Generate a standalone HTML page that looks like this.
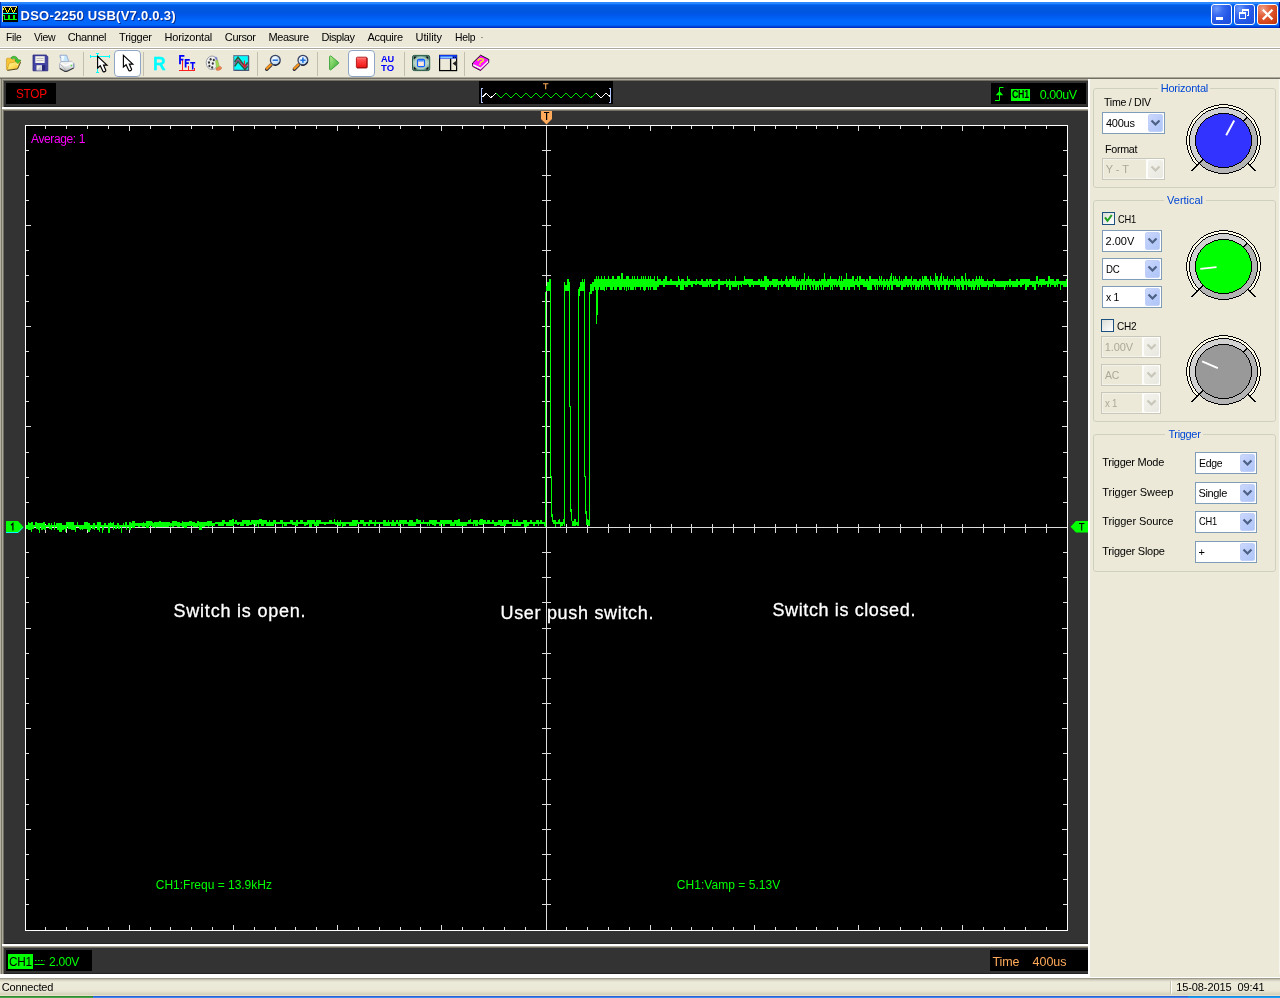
<!DOCTYPE html><html><head><meta charset="utf-8"><title>DSO-2250 USB</title><style>
html,body{margin:0;padding:0;}
body{width:1280px;height:998px;overflow:hidden;background:#ece9d8;position:relative;font-family:"Liberation Sans",sans-serif;}
.a{position:absolute;}
.t{position:absolute;white-space:pre;font-family:"Liberation Sans",sans-serif;}
#root{position:absolute;left:0;top:0;width:1280px;height:998px;overflow:hidden;will-change:transform;}
svg{position:absolute;overflow:visible;}
</style></head><body><div id="root">
<div class="a" style="left:0;top:0;width:1280px;height:2px;background:#fff"></div>
<div class="a" style="left:0;top:2px;width:1280px;height:26px;background:linear-gradient(to bottom,#2c88ff 0px,#2c88ff 1.5px,#0a6af8 2.5px,#005de9 3.5px,#0058e0 5px,#0056e0 11px,#0058ea 13px,#005ff4 16px,#0066fd 18px,#0067fd 22.5px,#005cf0 23.5px,#0046d8 24.5px,#002ec6 25.5px,#002ec6 26px)"></div>
<div class="a" style="left:0;top:28px;width:1280px;height:1px;background:#f8f1dc"></div>
<div class="a" style="left:0;top:2px;width:1px;height:26px;background:#0033b8"></div>
<div class="t" style="left:20.50px;top:7px;font-size:13px;line-height:17px;color:#fff;font-weight:700;letter-spacing:0.259px;text-shadow:1px 1px 0 #0a2a8a;">DSO-2250 USB(V7.0.0.3)</div>
<div class="t" style="left:5.50px;top:30px;font-size:11px;line-height:14px;color:#000;font-weight:400;letter-spacing:-0.300px;transform:scaleX(0.9272);transform-origin:0 0;">File</div>
<div class="t" style="left:33.60px;top:30px;font-size:11px;line-height:14px;color:#000;font-weight:400;letter-spacing:-0.300px;transform:scaleX(0.9541);transform-origin:0 0;">View</div>
<div class="t" style="left:67.80px;top:30px;font-size:11px;line-height:14px;color:#000;font-weight:400;letter-spacing:-0.396px;">Channel</div>
<div class="t" style="left:119.10px;top:30px;font-size:11px;line-height:14px;color:#000;font-weight:400;letter-spacing:-0.256px;">Trigger</div>
<div class="t" style="left:164.60px;top:30px;font-size:11px;line-height:14px;color:#000;font-weight:400;letter-spacing:-0.202px;">Horizontal</div>
<div class="t" style="left:224.80px;top:30px;font-size:11px;line-height:14px;color:#000;font-weight:400;letter-spacing:-0.361px;">Cursor</div>
<div class="t" style="left:268.50px;top:30px;font-size:11px;line-height:14px;color:#000;font-weight:400;letter-spacing:-0.383px;">Measure</div>
<div class="t" style="left:321.50px;top:30px;font-size:11px;line-height:14px;color:#000;font-weight:400;letter-spacing:-0.428px;">Display</div>
<div class="t" style="left:367.50px;top:30px;font-size:11px;line-height:14px;color:#000;font-weight:400;letter-spacing:-0.300px;">Acquire</div>
<div class="t" style="left:415.50px;top:30px;font-size:11px;line-height:14px;color:#000;font-weight:400;letter-spacing:-0.065px;">Utility</div>
<div class="t" style="left:454.50px;top:30px;font-size:11px;line-height:14px;color:#000;font-weight:400;letter-spacing:-0.300px;transform:scaleX(0.9437);transform-origin:0 0;">Help</div>
<div class="a" style="left:481px;top:37px;width:2px;height:1px;background:#9a9890"></div>
<div class="a" style="left:0;top:47px;width:1280px;height:1px;background:#fff"></div>
<div class="a" style="left:0;top:48px;width:1280px;height:1px;background:#aca899"></div>
<div class="a" style="left:0;top:49px;width:1280px;height:1px;background:#fff"></div>
<svg style="left:2px;top:6px" width="16" height="16" viewBox="0 0 16 16" shape-rendering="crispEdges"><rect width="16" height="16" fill="#000"/><path d="M0 15.5V.5H15" stroke="#d4d0c8" fill="none"/><rect x="1" y="2" width="1" height="2" fill="#ffff00"/><rect x="2" y="1" width="1" height="1" fill="#ffff00"/><rect x="3" y="2" width="1" height="2" fill="#ffff00"/><rect x="4" y="4" width="1" height="2" fill="#ffff00"/><rect x="5" y="6" width="1" height="1" fill="#ffff00"/><rect x="6" y="4" width="1" height="2" fill="#ffff00"/><rect x="7" y="2" width="1" height="2" fill="#ffff00"/><rect x="8" y="1" width="1" height="1" fill="#ffff00"/><rect x="9" y="2" width="1" height="2" fill="#ffff00"/><rect x="10" y="4" width="1" height="2" fill="#ffff00"/><rect x="11" y="6" width="1" height="1" fill="#ffff00"/><rect x="12" y="4" width="1" height="2" fill="#ffff00"/><rect x="13" y="2" width="1" height="2" fill="#ffff00"/><rect x="14" y="1" width="1" height="1" fill="#ffff00"/><rect x="1" y="7" width="14" height="1" fill="#00ffff"/><path d="M1 9.5H2.5V13.5H6.5V9.5H7.5V13.5H11.5V9.5H12.5V13.5H15" stroke="#00ff00" fill="none"/></svg>
<div class="a" style="left:1211px;top:4px;width:19px;height:19px;border:1px solid #fff;border-radius:3px;background:radial-gradient(circle at 25% 20%,#6f9bfa 0%,#3a6cf0 30%,#2457e6 60%,#1f4fd8 100%)"></div>
<div class="a" style="left:1234px;top:4px;width:19px;height:19px;border:1px solid #fff;border-radius:3px;background:radial-gradient(circle at 25% 20%,#6f9bfa 0%,#3a6cf0 30%,#2457e6 60%,#1f4fd8 100%)"></div>
<div class="a" style="left:1257px;top:4px;width:19px;height:19px;border:1px solid #fff;border-radius:3px;background:radial-gradient(circle at 25% 20%,#f0a088 0%,#e2603a 35%,#d4441a 70%,#b83208 100%)"></div>
<svg style="left:0;top:0" width="1280" height="32"><rect x="1216" y="17" width="7" height="3" fill="#fff"/><path d="M1239.5 13V18.5H1245.5V13M1239 13H1246M1242.5 11.5V10H1248.5V15.5H1246.5M1242 10H1249" stroke="#fff" stroke-width="1" fill="none" shape-rendering="crispEdges"/><rect x="1239" y="12" width="7" height="2" fill="#fff"/><rect x="1242" y="9" width="7" height="2" fill="#fff"/><path d="M1262.8 9.8L1272.4 19.4M1272.4 9.8L1262.8 19.4" stroke="#fff" stroke-width="2.2" fill="none"/></svg>
<div class="a" style="left:1279px;top:2px;width:1px;height:26px;background:#00138c;"></div>
<div class="a" style="left:83px;top:52px;width:1px;height:24px;background:#c2bfae;"></div>
<div class="a" style="left:143px;top:52px;width:1px;height:24px;background:#c2bfae;"></div>
<div class="a" style="left:257px;top:52px;width:1px;height:24px;background:#c2bfae;"></div>
<div class="a" style="left:317px;top:52px;width:1px;height:24px;background:#c2bfae;"></div>
<div class="a" style="left:404px;top:52px;width:1px;height:24px;background:#c2bfae;"></div>
<div class="a" style="left:464px;top:52px;width:1px;height:24px;background:#c2bfae;"></div>
<div class="a" style="left:114px;top:50px;width:25px;height:25px;border:1px solid #8fa6c6;border-radius:4px;background:#fff"></div>
<div class="a" style="left:348px;top:50px;width:25px;height:25px;border:1px solid #8fa6c6;border-radius:4px;background:#fff"></div>
<svg style="left:0;top:0" width="520" height="80" viewBox="0 0 520 80"><defs><linearGradient id="gfo" x1="0" y1="0" x2="1" y2="1"><stop offset="0" stop-color="#fff8b4"/><stop offset=".5" stop-color="#fde05c"/><stop offset="1" stop-color="#eeaa1c"/></linearGradient><linearGradient id="ggr" x1="0" y1="0" x2="1" y2="1"><stop offset="0" stop-color="#b8ee90"/><stop offset="1" stop-color="#2fa82c"/></linearGradient><linearGradient id="gpr" x1="0" y1="0" x2="0" y2="1"><stop offset="0" stop-color="#f4f4f4"/><stop offset=".5" stop-color="#e6e6e6"/><stop offset="1" stop-color="#b4b6ba"/></linearGradient><linearGradient id="grd" x1="0" y1="0" x2="0" y2="1"><stop offset="0" stop-color="#ff9a9a"/><stop offset=".25" stop-color="#ff4a4a"/><stop offset="1" stop-color="#f01010"/></linearGradient><radialGradient id="gln" cx=".4" cy=".35" r=".7"><stop offset="0" stop-color="#ffffff"/><stop offset="1" stop-color="#a8d0f0"/></radialGradient><linearGradient id="gfs" x1="0" y1="0" x2="0" y2="1"><stop offset="0" stop-color="#5c9484"/><stop offset=".5" stop-color="#b4d0c4"/><stop offset="1" stop-color="#5c9484"/></linearGradient></defs><path d="M6.4 58.9L7 58.2H11.4L12.6 59.4H17.2V62L9.4 63.4L7.2 70L6.4 69.4Z" fill="#f6c434" stroke="#c08c14" stroke-width=".5"/><path d="M7.2 70.1L9.3 63.2L20.7 60.9L17.6 68.6Z" fill="url(#gfo)" stroke="#c08c14" stroke-width=".4"/><path d="M7.4 70.4L17.6 68.9L20.6 62.2" fill="none" stroke="#4a3a10" stroke-width=".9"/><path d="M16.3 64.2L17.7 63.9L17.3 65.4Z" fill="#fff"/><path d="M10.9 58C12.2 55.6 16.8 55.4 18 59.7L20.8 60.3L17.9 63.5L15 60.6L16.2 60.1C15.4 58.2 13.4 58 12.6 58.8Z" fill="#48c838" stroke="#168a16" stroke-width=".6" stroke-linejoin="round"/><path d="M33 55H46.2L47.8 56.6V70.8H33Z" fill="#4444a4" stroke="#28287c" stroke-width=".8"/><rect x="35.3" y="56.2" width="9.4" height="6.8" fill="#f4f2e8"/><path d="M36.5 58.5H43.5M36.5 60.5H43.5" stroke="#b8b8c0" stroke-width=".9"/><rect x="36" y="65" width="9.2" height="5.6" fill="#26267a"/><rect x="36.4" y="65.2" width="5.6" height="5.2" fill="#f0eee6"/><path d="M36.6 70.2L41.6 65.4V70.2Z" fill="#c8c8d4"/><path d="M60 55.2H66.6L68.8 61.6H61V57.6H60Z" fill="#c4e6fc" stroke="#8494c8" stroke-width=".7" stroke-linejoin="round"/><path d="M61.2 56H64.4L63.2 61H61.6Z" fill="#f4fbff"/><path d="M59.5 63.6L61.6 61.6L71.4 61.3L73.7 63.2V67.8L66.6 71.2H64.6L59.5 68.2Z" fill="url(#gpr)" stroke="#8c98b4" stroke-width=".6" stroke-linejoin="round"/><path d="M60.4 64.4C63 66.6 64.6 67.8 65.6 70.6" stroke="#b4b4b8" stroke-width="1" fill="none"/><path d="M61 63.2L65.4 65.6L72.6 62.6" stroke="#fff" stroke-width="1.3" fill="none"/><path d="M59.8 68.5L64.7 71.4H66.7L73.7 68" stroke="#383838" stroke-width="1.1" fill="none" stroke-linejoin="round"/><path d="M73.9 63.6V67.8" stroke="#6c8cc4" stroke-width=".9"/><rect x="70.7" y="64.8" width="1.5" height="1.5" fill="#58d848"/><path d="M90 56.5H110M97.5 53.5V73M90.5 55V58M109.5 55V58M96 53.5H99M96 72.5H99" stroke="#00ffff" stroke-width="1.3" fill="none" shape-rendering="crispEdges"/><path d="M97.6 56.4V68.0L100.3 65.7L102.89999999999999 71.3C103.39999999999999 72.4 106.19999999999999 71.4 105.8 70.2L103.5 65.1H107.0Z" fill="#fff" stroke="#000" stroke-width="1.15" stroke-linejoin="miter"/><path d="M123.4 55.4V67.0L126.10000000000001 64.7L128.70000000000002 70.3C129.20000000000002 71.4 132.0 70.4 131.6 69.2L129.3 64.1H132.8Z" fill="#fff" stroke="#000" stroke-width="1.15" stroke-linejoin="miter"/><text x="152.9" y="69.5" font-family="Liberation Sans" font-weight="700" font-size="17.6" fill="#00ffff" stroke="#00ffff" stroke-width=".3">R</text><path d="M179 70.3H195.4M182.4 59V70M188.4 66V70M194.4 68V70" stroke="#ff2020" stroke-width="1" fill="none" shape-rendering="crispEdges"/><path d="M180 64.2V55.8H184.4M180 59.6H183.4" stroke="#0000ff" stroke-width="1.8" fill="none"/><path d="M185.6 67.6V59.8H189.8M185.6 63.2H188.8" stroke="#0000ff" stroke-width="1.7" fill="none"/><path d="M190.2 62.8H195.2M192.7 62.8V69.4" stroke="#0000ff" stroke-width="1.6" fill="none"/><ellipse cx="212" cy="62.8" rx="5.8" ry="6.8" fill="#f0f0f0" stroke="#9498a0" stroke-width=".9"/><ellipse cx="210.6" cy="59.2" rx="1.05" ry="1.25" fill="#383838"/><ellipse cx="213.8" cy="60" rx="1.05" ry="1.25" fill="#383838"/><ellipse cx="209" cy="62.6" rx="1.05" ry="1.25" fill="#383838"/><ellipse cx="212.8" cy="63.6" rx="1.05" ry="1.25" fill="#383838"/><ellipse cx="209.4" cy="66" rx="1.05" ry="1.25" fill="#383838"/><ellipse cx="212.2" cy="67.4" rx="1.05" ry="1.25" fill="#383838"/><path d="M214.4 57C216.4 56.2 217.8 57.6 217.4 59.6L216.2 60.4Z" fill="#8088d0"/><path d="M215.6 60.4L217.6 60L219.4 66.6L216.4 68.8Z" fill="#a8d858" stroke="#78a838" stroke-width=".4"/><path d="M216.2 68.6L219.4 66.4C221.4 66.6 222.2 67.8 221.4 68.8C219.8 70.6 217 70.8 216 69.8Z" fill="#f0804c" stroke="#b85830" stroke-width=".4"/><rect x="233.8" y="55.6" width="14.6" height="14.8" fill="#00ffff" stroke="#6c7c98" stroke-width="1.2"/><path d="M234.4 70.4H248.6V56" stroke="#485878" stroke-width="1.2" fill="none"/><path d="M234.6 62L238 57.2L245 66.4L247.6 62.4M234.6 66.4L238 61.6L245 69.6L247.6 66.2" stroke="#285838" stroke-width="1.5" fill="none"/><path d="M234.6 64.2L238 59.6L245 67.8L247.8 64.2" stroke="#e01060" stroke-width="1" fill="none"/><path d="M244.4 60.6V66.6M243 64.6L244.4 66.8L245.9 64.6" stroke="#ff1020" stroke-width="1" fill="none"/><path d="M270.90000000000003 65L266.7 69.2" stroke="#303038" stroke-width="3.4" stroke-linecap="round"/><path d="M271.1 64.4L266.7 68.6" stroke="#f4941c" stroke-width="2.2" stroke-linecap="round"/><circle cx="275.3" cy="60.2" r="4.9" fill="url(#gln)" stroke="#3c4464" stroke-width="1.3"/><path d="M273.5 64.9A5 5 0 0 0 279.90000000000003 62" stroke="#20243c" stroke-width="1.3" fill="none"/><path d="M272.7 60.2H277.90000000000003" stroke="#1c6cdc" stroke-width="1.5"/><path d="M298.5 65L294.29999999999995 69.2" stroke="#303038" stroke-width="3.4" stroke-linecap="round"/><path d="M298.7 64.4L294.29999999999995 68.6" stroke="#f4941c" stroke-width="2.2" stroke-linecap="round"/><circle cx="302.9" cy="60.2" r="4.9" fill="url(#gln)" stroke="#3c4464" stroke-width="1.3"/><path d="M301.09999999999997 64.9A5 5 0 0 0 307.5 62" stroke="#20243c" stroke-width="1.3" fill="none"/><path d="M300.29999999999995 60.2H305.5M302.9 57.6V62.8" stroke="#1c6cdc" stroke-width="1.6"/><path d="M329.6 56.6C329.6 55.9 330.5 55.7 331.1 56.2L338.3 62.2C338.8 62.6 338.8 63.2 338.3 63.6L331.1 69.6C330.5 70.1 329.6 69.9 329.6 69.2Z" fill="url(#ggr)" stroke="#2c9c2c" stroke-width=".9"/><rect x="356.4" y="57.2" width="10.6" height="10.6" rx="1" fill="url(#grd)" stroke="#b01010" stroke-width=".9"/><path d="M367 58V67.8H357" stroke="#900808" stroke-width=".9" fill="none"/><text x="380.9" y="61.9" font-family="Liberation Sans" font-weight="700" font-size="9.8" fill="#0000ff" textLength="13.3" lengthAdjust="spacingAndGlyphs">AU</text><text x="381.1" y="70.9" font-family="Liberation Sans" font-weight="700" font-size="9.8" fill="#0000ff" textLength="13.1" lengthAdjust="spacingAndGlyphs">TO</text><rect x="412.5" y="55.4" width="17.2" height="15.2" rx="1.8" fill="url(#gfs)" stroke="#2c5c4c" stroke-width="1"/><ellipse cx="421" cy="63" rx="6.6" ry="6.6" fill="#c0d8cc" opacity=".75"/><path d="M413.8 56.6H416.8L413.8 59.6ZM428.4 56.6H425.4L428.4 59.6ZM413.8 69.4H416.8L413.8 66.4ZM428.4 69.4H425.4L428.4 66.4Z" fill="#101010"/><rect x="417.5" y="59.4" width="7" height="7.2" rx="1.2" fill="#fbe8dc" stroke="#1060ff" stroke-width="1.2"/><rect x="418.2" y="60" width="5.6" height="1.6" fill="#5090ff"/><rect x="439.6" y="55.4" width="17" height="15.2" fill="#ece9d8" stroke="#000" stroke-width="1.2"/><rect x="439.4" y="55" width="17.4" height="3.6" fill="#1038f0"/><rect x="440.4" y="56.6" width="12" height="1.2" fill="#a0f0ff"/><path d="M453 57.4H456" stroke="#000" stroke-width="1" stroke-dasharray="1 .8"/><path d="M450.6 58.6V70.4" stroke="#000" stroke-width="1.3"/><path d="M457 60.2V66.8L452.6 63.5Z" fill="#202020"/><path d="M472.6 63L480.6 55.2L488.8 59.4L488.6 62.6L480.6 70.6L472.8 66.4Z" fill="#ff10ff" stroke="#000" stroke-width=".9" stroke-linejoin="round"/><path d="M473.2 64L480.6 67.6L488.2 60.2L488.2 62.4L480.6 69.8L473.2 66.2Z" fill="#f4f4f0"/><path d="M473.2 66.4L480.6 70L488.4 62.6" stroke="#a000a0" stroke-width="1" fill="none"/><path d="M478 60.4C479 58.2 483 58.4 483.6 59.8C484 61.4 481 61.4 480.4 62.8M479.8 64.2L480 64.4" stroke="#e8f020" stroke-width="1.5" fill="none" stroke-linecap="round"/></svg>
<div class="a" style="left:0;top:77px;width:1280px;height:1px;background:#aca899"></div>
<div class="a" style="left:0;top:78px;width:1280px;height:1px;background:#716f64"></div>
<div class="a" id="scope" style="left:0;top:79px;width:1088px;height:895px;background:#333"></div>
<div class="a" style="left:0px;top:79px;width:1px;height:895px;background:#b5b2a3"></div>
<div class="a" style="left:1px;top:79px;width:1px;height:895px;background:#7c7a6b"></div>
<div class="a" style="left:2px;top:79px;width:1086px;height:1px;background:#aca899"></div>
<div class="a" style="left:2px;top:80px;width:1086px;height:1px;background:#716f64"></div>
<div class="a" style="left:2px;top:79px;width:1px;height:28px;background:#aca899"></div>
<div class="a" style="left:3px;top:80px;width:1px;height:27px;background:#716f64"></div>
<div class="a" style="left:4px;top:106px;width:1084px;height:1px;background:#232323"></div>
<div class="a" style="left:2px;top:109px;width:1086px;height:1px;background:#aca899"></div>
<div class="a" style="left:2px;top:110px;width:1086px;height:1px;background:#716f64"></div>
<div class="a" style="left:2px;top:109px;width:1px;height:835px;background:#aca899"></div>
<div class="a" style="left:3px;top:110px;width:1px;height:834px;background:#716f64"></div>
<div class="a" style="left:4px;top:943px;width:1084px;height:1px;background:#232323"></div>
<div class="a" style="left:2px;top:946px;width:1086px;height:1px;background:#aca899"></div>
<div class="a" style="left:2px;top:947px;width:1086px;height:1px;background:#716f64"></div>
<div class="a" style="left:2px;top:946px;width:1px;height:28px;background:#aca899"></div>
<div class="a" style="left:3px;top:947px;width:1px;height:27px;background:#716f64"></div>
<div class="a" style="left:4px;top:973px;width:1084px;height:1px;background:#232323"></div>
<div class="a" style="left:2px;top:107px;width:1086px;height:2px;background:#fff"></div>
<div class="a" style="left:2px;top:944px;width:1086px;height:2px;background:#fff"></div>
<div class="a" style="left:6px;top:83px;width:50px;height:21px;background:#000"></div>
<div class="a" style="left:991px;top:83px;width:95px;height:21px;background:#000"></div>
<div class="a" style="left:479px;top:81px;width:134px;height:23px;background:#000"></div>
<div class="a" style="left:6px;top:950px;width:86px;height:21px;background:#000"></div>
<div class="a" style="left:990px;top:950px;width:98px;height:21px;background:#000"></div>
<div class="t" style="left:16.00px;top:86px;font-size:12px;line-height:16px;color:#ff0000;font-weight:400;letter-spacing:-0.300px;transform:scaleX(0.9824);transform-origin:0 0;">STOP</div>
<div class="a" style="left:25px;top:125px;width:1043px;height:806px;background:#000"></div>
<svg style="left:0;top:0" width="1280" height="998" viewBox="0 0 1280 998" shape-rendering="crispEdges"><path d="M45.5 126v3M45.5 930v-3M45.5 524v9M66.5 126v3M66.5 930v-3M66.5 524v9M87.5 126v3M87.5 930v-3M87.5 524v9M108.5 126v3M108.5 930v-3M108.5 524v9M129.5 126v5M129.5 930v-5M129.5 524v9M150.5 126v3M150.5 930v-3M150.5 524v9M170.5 126v3M170.5 930v-3M170.5 524v9M191.5 126v3M191.5 930v-3M191.5 524v9M212.5 126v3M212.5 930v-3M212.5 524v9M233.5 126v5M233.5 930v-5M233.5 524v9M254.5 126v3M254.5 930v-3M254.5 524v9M275.5 126v3M275.5 930v-3M275.5 524v9M295.5 126v3M295.5 930v-3M295.5 524v9M316.5 126v3M316.5 930v-3M316.5 524v9M337.5 126v5M337.5 930v-5M337.5 524v9M358.5 126v3M358.5 930v-3M358.5 524v9M379.5 126v3M379.5 930v-3M379.5 524v9M400.5 126v3M400.5 930v-3M400.5 524v9M420.5 126v3M420.5 930v-3M420.5 524v9M441.5 126v5M441.5 930v-5M441.5 524v9M462.5 126v3M462.5 930v-3M462.5 524v9M483.5 126v3M483.5 930v-3M483.5 524v9M504.5 126v3M504.5 930v-3M504.5 524v9M525.5 126v3M525.5 930v-3M525.5 524v9M546.5 126v5M546.5 930v-5M566.5 126v3M566.5 930v-3M566.5 524v9M587.5 126v3M587.5 930v-3M587.5 524v9M608.5 126v3M608.5 930v-3M608.5 524v9M629.5 126v3M629.5 930v-3M629.5 524v9M650.5 126v5M650.5 930v-5M650.5 524v9M671.5 126v3M671.5 930v-3M671.5 524v9M691.5 126v3M691.5 930v-3M691.5 524v9M712.5 126v3M712.5 930v-3M712.5 524v9M733.5 126v3M733.5 930v-3M733.5 524v9M754.5 126v5M754.5 930v-5M754.5 524v9M775.5 126v3M775.5 930v-3M775.5 524v9M796.5 126v3M796.5 930v-3M796.5 524v9M816.5 126v3M816.5 930v-3M816.5 524v9M837.5 126v3M837.5 930v-3M837.5 524v9M858.5 126v5M858.5 930v-5M858.5 524v9M879.5 126v3M879.5 930v-3M879.5 524v9M900.5 126v3M900.5 930v-3M900.5 524v9M921.5 126v3M921.5 930v-3M921.5 524v9M941.5 126v3M941.5 930v-3M941.5 524v9M962.5 126v5M962.5 930v-5M962.5 524v9M983.5 126v3M983.5 930v-3M983.5 524v9M1004.5 126v3M1004.5 930v-3M1004.5 524v9M1025.5 126v3M1025.5 930v-3M1025.5 524v9M1046.5 126v3M1046.5 930v-3M1046.5 524v9M26 150.5h3M1067 150.5h-4M542 150.5h9M26 175.5h3M1067 175.5h-4M542 175.5h9M26 200.5h3M1067 200.5h-4M542 200.5h9M26 225.5h5M1067 225.5h-5M542 225.5h9M26 250.5h3M1067 250.5h-4M542 250.5h9M26 275.5h3M1067 275.5h-4M542 275.5h9M26 301.5h3M1067 301.5h-4M542 301.5h9M26 326.5h5M1067 326.5h-5M542 326.5h9M26 351.5h3M1067 351.5h-4M542 351.5h9M26 376.5h3M1067 376.5h-4M542 376.5h9M26 401.5h3M1067 401.5h-4M542 401.5h9M26 426.5h5M1067 426.5h-5M542 426.5h9M26 452.5h3M1067 452.5h-4M542 452.5h9M26 477.5h3M1067 477.5h-4M542 477.5h9M26 502.5h3M1067 502.5h-4M542 502.5h9M26 527.5h5M1067 527.5h-5M26 552.5h3M1067 552.5h-4M542 552.5h9M26 577.5h3M1067 577.5h-4M542 577.5h9M26 602.5h3M1067 602.5h-4M542 602.5h9M26 628.5h5M1067 628.5h-5M542 628.5h9M26 653.5h3M1067 653.5h-4M542 653.5h9M26 678.5h3M1067 678.5h-4M542 678.5h9M26 703.5h3M1067 703.5h-4M542 703.5h9M26 728.5h5M1067 728.5h-5M542 728.5h9M26 753.5h3M1067 753.5h-4M542 753.5h9M26 779.5h3M1067 779.5h-4M542 779.5h9M26 804.5h3M1067 804.5h-4M542 804.5h9M26 829.5h5M1067 829.5h-5M542 829.5h9M26 854.5h3M1067 854.5h-4M542 854.5h9M26 879.5h3M1067 879.5h-4M542 879.5h9M26 904.5h3M1067 904.5h-4M542 904.5h9M546.5 125V930M25 527.5H1067" fill="none" stroke="#dcdcdc" stroke-width="1"/><path d="M25.5 125.5H1067.5V930.5H25.5Z" fill="none" stroke="#fff" stroke-width="1"/></svg>
<svg style="left:0;top:0" width="1280" height="998" viewBox="0 0 1280 998" shape-rendering="crispEdges"><path d="M26.5 525V529M27.5 525V529M28.5 522V530M29.5 523V530M30.5 523V530M31.5 522V532M32.5 522V529M33.5 525V529M34.5 525V527M35.5 522V527M36.5 522V529M37.5 523V529M38.5 523V530M39.5 523V533M40.5 523V527M41.5 523V530M42.5 523V530M43.5 522V529M44.5 522V530M45.5 525V530M46.5 525V527M47.5 525V527M48.5 523V527M49.5 523V529M50.5 525V529M51.5 523V530M52.5 525V527M53.5 525V527M54.5 522V530M55.5 525V527M56.5 523V527M57.5 523V530M58.5 523V530M59.5 523V532M60.5 523V532M61.5 523V532M62.5 525V530M63.5 525V530M64.5 525V529M65.5 525V532M66.5 522V529M67.5 522V527M68.5 522V529M69.5 522V529M70.5 522V529M71.5 522V530M72.5 522V530M73.5 522V530M74.5 525V530M75.5 525V532M76.5 525V527M77.5 522V527M78.5 525V527M79.5 525V529M80.5 525V530M81.5 525V529M82.5 525V530M83.5 525V529M84.5 522V529M85.5 522V529M86.5 522V529M87.5 522V530M88.5 523V532M89.5 523V532M90.5 525V530M91.5 525V527M92.5 525V529M93.5 523V529M94.5 523V530M95.5 525V527M96.5 525V527M97.5 522V530M98.5 522V530M99.5 522V532M100.5 522V527M101.5 525V527M102.5 525V533M103.5 525V530M104.5 523V527M105.5 523V527M106.5 525V527M107.5 525V527M108.5 523V533M109.5 523V533M110.5 522V527M111.5 523V527M112.5 523V527M113.5 522V530M114.5 525V527M115.5 525V529M116.5 525V529M117.5 523V527M118.5 523V529M119.5 525V529M120.5 525V527M121.5 525V533M122.5 525V527M123.5 523V527M124.5 525V527M125.5 522V527M126.5 522V530M127.5 525V527M128.5 525V527M129.5 522V530M130.5 522V530M131.5 523V527M132.5 521V528M133.5 521V528M134.5 521V528M135.5 523V526M136.5 523V526M137.5 523V526M138.5 523V527M139.5 523V527M140.5 523V526M141.5 523V526M142.5 523V527M143.5 522V527M144.5 523V527M145.5 523V526M146.5 521V528M147.5 521V528M148.5 521V528M149.5 521V526M150.5 521V526M151.5 521V526M152.5 522V527M153.5 523V527M154.5 522V527M155.5 522V528M156.5 522V527M157.5 522V527M158.5 522V527M159.5 521V527M160.5 521V527M161.5 522V527M162.5 522V527M163.5 522V527M164.5 522V527M165.5 522V527M166.5 522V527M167.5 522V527M168.5 522V527M169.5 522V526M170.5 523V527M171.5 523V526M172.5 521V527M173.5 521V527M174.5 521V526M175.5 521V526M176.5 521V526M177.5 522V527M178.5 522V527M179.5 522V527M180.5 523V526M181.5 523V526M182.5 521V527M183.5 522V527M184.5 522V528M185.5 522V528M186.5 522V528M187.5 522V526M188.5 522V526M189.5 521V526M190.5 521V526M191.5 521V526M192.5 522V526M193.5 522V527M194.5 522V527M195.5 523V527M196.5 523V527M197.5 521V527M198.5 521V526M199.5 522V530M200.5 522V530M201.5 522V530M202.5 522V527M203.5 522V527M204.5 522V527M205.5 522V526M206.5 522V526M207.5 521V526M208.5 521V527M209.5 521V526M210.5 521V526M211.5 521V526M212.5 523V526M213.5 523V526M214.5 523V526M215.5 522V524M216.5 522V524M217.5 522V524M218.5 522V526M219.5 522V526M220.5 522V526M221.5 522V526M222.5 520V526M223.5 520V526M224.5 520V524M225.5 522V524M226.5 522V526M227.5 522V526M228.5 522V526M229.5 520V526M230.5 520V526M231.5 520V526M232.5 519V526M233.5 519V526M234.5 522V524M235.5 520V524M236.5 520V524M237.5 522V525M238.5 522V525M239.5 522V524M240.5 522V526M241.5 522V526M242.5 520V526M243.5 520V526M244.5 520V524M245.5 520V524M246.5 520V526M247.5 520V526M248.5 520V526M249.5 520V525M250.5 522V525M251.5 520V525M252.5 520V524M253.5 520V525M254.5 520V524M255.5 520V526M256.5 520V526M257.5 520V524M258.5 520V527M259.5 519V524M260.5 519V524M261.5 519V526M262.5 520V526M263.5 520V526M264.5 520V524M265.5 520V524M266.5 520V526M267.5 522V526M268.5 522V526M269.5 520V526M270.5 522V526M271.5 522V526M272.5 522V526M273.5 520V526M274.5 520V524M275.5 520V524M276.5 522V524M277.5 522V524M278.5 522V524M279.5 522V524M280.5 520V524M281.5 520V524M282.5 520V527M283.5 522V524M284.5 522V526M285.5 522V526M286.5 522V526M287.5 522V524M288.5 522V524M289.5 522V524M290.5 520V524M291.5 520V524M292.5 520V525M293.5 522V525M294.5 522V525M295.5 522V526M296.5 520V526M297.5 520V526M298.5 522V524M299.5 522V524M300.5 520V524M301.5 520V524M302.5 520V524M303.5 522V524M304.5 522V526M305.5 522V526M306.5 522V525M307.5 520V525M308.5 520V524M309.5 520V527M310.5 520V527M311.5 520V527M312.5 520V524M313.5 520V524M314.5 520V526M315.5 522V526M316.5 520V526M317.5 520V526M318.5 520V526M319.5 520V524M320.5 520V524M321.5 522V524M322.5 522V524M323.5 522V524M324.5 522V525M325.5 522V525M326.5 522V524M327.5 522V524M328.5 522V524M329.5 520V524M330.5 520V524M331.5 520V524M332.5 522V524M333.5 522V524M334.5 519V524M335.5 522V525M336.5 522V525M337.5 520V525M338.5 522V526M339.5 522V526M340.5 520V526M341.5 522V524M342.5 522V527M343.5 522V526M344.5 522V526M345.5 522V526M346.5 522V524M347.5 522V524M348.5 522V524M349.5 522V526M350.5 522V526M351.5 522V526M352.5 520V526M353.5 520V526M354.5 520V526M355.5 520V526M356.5 520V526M357.5 520V524M358.5 522V524M359.5 522V524M360.5 520V524M361.5 520V524M362.5 520V524M363.5 520V526M364.5 522V526M365.5 522V526M366.5 522V524M367.5 522V524M368.5 522V526M369.5 520V526M370.5 520V524M371.5 520V524M372.5 522V524M373.5 522V524M374.5 522V526M375.5 520V526M376.5 522V524M377.5 522V524M378.5 522V524M379.5 522V524M380.5 522V524M381.5 522V524M382.5 522V524M383.5 520V526M384.5 520V526M385.5 520V526M386.5 522V526M387.5 522V526M388.5 520V526M389.5 522V526M390.5 522V524M391.5 522V526M392.5 520V526M393.5 520V526M394.5 522V526M395.5 522V526M396.5 520V524M397.5 520V524M398.5 522V526M399.5 520V526M400.5 520V524M401.5 520V524M402.5 520V524M403.5 520V526M404.5 520V524M405.5 520V524M406.5 520V524M407.5 522V524M408.5 522V526M409.5 520V526M410.5 520V526M411.5 520V526M412.5 520V526M413.5 522V526M414.5 522V526M415.5 522V526M416.5 519V524M417.5 519V524M418.5 520V524M419.5 520V524M420.5 520V524M421.5 522V524M422.5 522V524M423.5 520V524M424.5 522V524M425.5 522V524M426.5 522V524M427.5 522V526M428.5 522V524M429.5 520V526M430.5 520V524M431.5 520V524M432.5 520V525M433.5 520V525M434.5 520V526M435.5 520V526M436.5 520V524M437.5 522V524M438.5 522V524M439.5 522V526M440.5 520V526M441.5 520V524M442.5 520V524M443.5 520V526M444.5 520V526M445.5 520V524M446.5 520V524M447.5 520V524M448.5 520V524M449.5 520V524M450.5 520V526M451.5 520V526M452.5 522V526M453.5 522V526M454.5 520V526M455.5 520V524M456.5 520V526M457.5 520V526M458.5 519V526M459.5 519V526M460.5 522V526M461.5 522V526M462.5 522V526M463.5 522V526M464.5 522V526M465.5 522V526M466.5 522V526M467.5 522V524M468.5 520V524M469.5 520V524M470.5 519V524M471.5 522V524M472.5 522V524M473.5 520V526M474.5 520V524M475.5 520V526M476.5 520V526M477.5 520V526M478.5 522V524M479.5 520V525M480.5 519V525M481.5 519V525M482.5 519V525M483.5 520V524M484.5 520V524M485.5 520V524M486.5 522V524M487.5 520V524M488.5 520V524M489.5 520V524M490.5 522V524M491.5 522V524M492.5 520V524M493.5 520V524M494.5 522V526M495.5 522V526M496.5 522V526M497.5 522V525M498.5 520V525M499.5 520V525M500.5 520V526M501.5 520V526M502.5 522V526M503.5 520V526M504.5 520V526M505.5 520V526M506.5 520V524M507.5 520V524M508.5 520V524M509.5 522V524M510.5 522V524M511.5 522V524M512.5 522V526M513.5 519V526M514.5 522V526M515.5 522V526M516.5 520V526M517.5 520V526M518.5 522V526M519.5 522V526M520.5 522V526M521.5 522V524M522.5 522V524M523.5 520V524M524.5 520V527M525.5 520V527M526.5 520V527M527.5 522V526M528.5 522V526M529.5 522V524M530.5 520V524M531.5 520V524M532.5 522V524M533.5 522V526M534.5 522V526M535.5 522V524M536.5 520V524M537.5 520V524M538.5 520V526M539.5 522V524M540.5 520V524M541.5 520V524M542.5 522V524M543.5 522V524M544.5 522V526M545.5 292V527M546.5 286V291M547.5 282V291M548.5 282V291M549.5 279V291M550.5 279V291M553.5 520V524M554.5 520V524M555.5 520V527M556.5 522V524M557.5 522V524M558.5 520V524M559.5 519V524M560.5 522V527M561.5 522V526M562.5 522V526M563.5 519V524M564.5 522V524M565.5 285V291M566.5 285V291M567.5 279V291M568.5 279V291M572.5 521V526M573.5 521V526M574.5 519V526M575.5 519V526M576.5 522V525M577.5 522V526M578.5 522V526M579.5 287V296M580.5 282V291M581.5 282V291M582.5 279V291M583.5 282V291M586.5 520V525M587.5 519V525M588.5 520V526M589.5 520V526M590.5 284V294M591.5 284V294M592.5 282V291M593.5 282V291M594.5 279V287M595.5 279V290M596.5 276V290M597.5 279V287M598.5 276V290M599.5 279V287M600.5 279V290M601.5 276V290M602.5 279V290M603.5 279V290M604.5 276V291M605.5 279V287M606.5 279V290M607.5 279V287M608.5 276V287M609.5 279V287M610.5 279V290M611.5 279V290M612.5 276V290M613.5 276V287M614.5 279V290M615.5 279V290M616.5 279V290M617.5 276V287M618.5 276V287M619.5 276V290M620.5 279V290M621.5 273V290M622.5 273V287M623.5 279V287M624.5 279V290M625.5 279V287M626.5 276V291M627.5 276V287M628.5 276V290M629.5 279V287M630.5 279V290M631.5 279V290M632.5 276V290M633.5 279V290M634.5 276V287M635.5 279V290M636.5 279V287M637.5 276V287M638.5 279V287M639.5 279V287M640.5 279V290M641.5 276V287M642.5 279V287M643.5 276V290M644.5 279V291M645.5 276V290M646.5 279V287M647.5 279V287M648.5 276V290M649.5 279V287M650.5 276V290M651.5 279V287M652.5 279V287M653.5 279V290M654.5 276V290M655.5 281V290M656.5 281V290M657.5 276V287M658.5 279V287M659.5 279V285M660.5 279V285M661.5 281V285M662.5 281V285M663.5 279V287M664.5 279V287M665.5 276V285M666.5 276V285M667.5 281V285M668.5 281V285M669.5 281V285M670.5 279V285M671.5 279V285M672.5 281V285M673.5 281V285M674.5 281V285M675.5 281V285M676.5 281V287M677.5 281V287M678.5 276V285M679.5 279V285M680.5 281V290M681.5 279V290M682.5 279V290M683.5 279V290M684.5 281V285M685.5 281V287M686.5 281V287M687.5 276V287M688.5 279V285M689.5 279V285M690.5 281V285M691.5 281V287M692.5 281V287M693.5 281V284M694.5 281V284M695.5 281V285M696.5 279V285M697.5 281V284M698.5 281V284M699.5 281V285M700.5 281V285M701.5 279V285M702.5 279V287M703.5 281V287M704.5 281V287M705.5 281V287M706.5 279V287M707.5 279V287M708.5 281V285M709.5 279V287M710.5 279V284M711.5 279V287M712.5 281V287M713.5 281V287M714.5 281V285M715.5 281V285M716.5 281V284M717.5 281V284M718.5 279V290M719.5 279V290M720.5 281V285M721.5 281V285M722.5 281V285M723.5 281V285M724.5 281V284M725.5 281V284M726.5 279V287M727.5 281V287M728.5 281V285M729.5 279V290M730.5 281V290M731.5 281V285M732.5 281V287M733.5 281V287M734.5 281V287M735.5 276V287M736.5 281V287M737.5 281V285M738.5 281V290M739.5 281V285M740.5 281V285M741.5 281V287M742.5 281V284M743.5 281V285M744.5 276V285M745.5 279V285M746.5 279V285M747.5 279V284M748.5 279V285M749.5 279V287M750.5 279V287M751.5 279V285M752.5 279V285M753.5 281V287M754.5 281V285M755.5 281V285M756.5 281V285M757.5 281V285M758.5 279V285M759.5 279V285M760.5 281V287M761.5 279V287M762.5 281V287M763.5 281V287M764.5 276V287M765.5 276V290M766.5 276V290M767.5 279V287M768.5 279V287M769.5 281V285M770.5 281V287M771.5 281V285M772.5 279V285M773.5 279V287M774.5 279V287M775.5 279V287M776.5 279V287M777.5 279V285M778.5 281V290M779.5 281V285M780.5 281V285M781.5 279V287M782.5 281V287M783.5 281V285M784.5 281V284M785.5 279V285M786.5 276V287M787.5 279V287M788.5 281V287M789.5 279V287M790.5 279V285M791.5 279V287M792.5 276V287M793.5 276V287M794.5 279V287M795.5 276V287M796.5 281V290M797.5 279V287M798.5 281V287M799.5 279V285M800.5 281V290M801.5 279V290M802.5 279V285M803.5 279V290M804.5 273V290M805.5 281V285M806.5 279V290M807.5 279V285M808.5 276V285M809.5 279V287M810.5 279V290M811.5 279V285M812.5 281V287M813.5 279V290M814.5 279V285M815.5 281V290M816.5 281V290M817.5 281V287M818.5 281V290M819.5 279V285M820.5 281V287M821.5 279V290M822.5 279V285M823.5 279V290M824.5 273V287M825.5 279V287M826.5 281V287M827.5 279V287M828.5 279V287M829.5 279V285M830.5 276V290M831.5 279V287M832.5 279V290M833.5 279V285M834.5 279V287M835.5 279V285M836.5 279V287M837.5 281V287M838.5 279V285M839.5 276V287M840.5 281V290M841.5 276V290M842.5 281V290M843.5 279V287M844.5 279V287M845.5 279V290M846.5 273V290M847.5 279V287M848.5 279V290M849.5 279V290M850.5 279V287M851.5 279V287M852.5 276V287M853.5 276V287M854.5 281V290M855.5 279V285M856.5 279V285M857.5 276V287M858.5 281V287M859.5 276V290M860.5 276V285M861.5 279V285M862.5 279V285M863.5 279V287M864.5 279V287M865.5 281V287M866.5 279V287M867.5 279V290M868.5 281V290M869.5 276V290M870.5 276V290M871.5 279V290M872.5 279V285M873.5 279V285M874.5 279V287M875.5 279V290M876.5 279V285M877.5 279V290M878.5 281V285M879.5 276V287M880.5 279V285M881.5 276V287M882.5 281V285M883.5 279V290M884.5 279V287M885.5 281V287M886.5 279V285M887.5 279V290M888.5 281V287M889.5 279V290M890.5 276V285M891.5 273V290M892.5 281V290M893.5 276V285M894.5 279V285M895.5 276V285M896.5 279V287M897.5 279V287M898.5 281V287M899.5 276V287M900.5 281V285M901.5 279V290M902.5 281V290M903.5 279V287M904.5 279V287M905.5 276V287M906.5 276V285M907.5 279V287M908.5 279V287M909.5 279V285M910.5 279V287M911.5 276V290M912.5 281V285M913.5 279V287M914.5 279V285M915.5 279V290M916.5 279V290M917.5 281V287M918.5 281V290M919.5 279V287M920.5 279V285M921.5 281V290M922.5 276V287M923.5 279V290M924.5 276V285M925.5 276V285M926.5 276V287M927.5 279V285M928.5 279V287M929.5 281V290M930.5 276V285M931.5 279V285M932.5 281V285M933.5 279V285M934.5 281V287M935.5 273V290M936.5 276V285M937.5 276V287M938.5 281V290M939.5 279V290M940.5 276V285M941.5 273V287M942.5 281V285M943.5 276V285M944.5 279V290M945.5 279V290M946.5 279V285M947.5 276V285M948.5 281V290M949.5 279V287M950.5 281V285M951.5 279V285M952.5 279V285M953.5 281V285M954.5 276V287M955.5 281V285M956.5 279V287M957.5 279V290M958.5 279V287M959.5 279V290M960.5 281V285M961.5 276V287M962.5 276V290M963.5 279V290M964.5 281V285M965.5 273V285M966.5 279V290M967.5 281V285M968.5 279V287M969.5 279V287M970.5 281V287M971.5 281V290M972.5 279V287M973.5 279V290M974.5 281V290M975.5 279V287M976.5 276V285M977.5 279V290M978.5 279V287M979.5 276V290M980.5 279V285M981.5 276V287M982.5 279V287M983.5 279V287M984.5 281V287M985.5 281V287M986.5 281V287M987.5 279V285M988.5 281V290M989.5 281V287M990.5 281V287M991.5 281V287M992.5 281V287M993.5 279V284M994.5 279V287M995.5 281V285M996.5 281V287M997.5 281V287M998.5 281V287M999.5 281V287M1000.5 281V287M1001.5 281V287M1002.5 281V287M1003.5 281V287M1004.5 281V290M1005.5 281V287M1006.5 281V285M1007.5 281V287M1008.5 281V285M1009.5 279V287M1010.5 279V287M1011.5 281V285M1012.5 281V287M1013.5 281V287M1014.5 281V287M1015.5 281V287M1016.5 279V287M1017.5 279V287M1018.5 281V285M1019.5 281V285M1020.5 279V287M1021.5 279V287M1022.5 279V285M1023.5 279V285M1024.5 279V284M1025.5 279V290M1026.5 279V290M1027.5 279V287M1028.5 279V287M1029.5 279V285M1030.5 281V285M1031.5 281V285M1032.5 281V287M1033.5 281V287M1034.5 281V290M1035.5 281V290M1036.5 276V284M1037.5 276V284M1038.5 281V287M1039.5 279V285M1040.5 279V285M1041.5 279V287M1042.5 279V285M1043.5 279V285M1044.5 279V285M1045.5 281V285M1046.5 281V284M1047.5 281V287M1048.5 276V287M1049.5 276V284M1050.5 279V287M1051.5 279V285M1052.5 279V285M1053.5 279V285M1054.5 281V287M1055.5 281V287M1056.5 279V285M1057.5 279V287M1058.5 279V284M1059.5 281V284M1060.5 281V290M1061.5 281V285M1062.5 281V285M1063.5 281V287M1064.5 281V287M1065.5 281V287M1066.5 279V287M550.5 280V477M551.5 476V517M552.5 514V522M564.5 282V526M569.5 282V407M570.5 406V512M571.5 509V521M578.5 289V526M584.5 279V477M585.5 476V514M586.5 511V521M589.5 292V526M596.5 280V324M597.5 280V315" fill="none" stroke="#00ff00" stroke-width="1"/></svg>
<svg style="left:0;top:0" width="1280" height="998" viewBox="0 0 1280 998"><path d="M541 111H552V119L546.5 124.5L541 119Z" fill="#ffaa5a"/><path d="M544 112.5H549.2M546.6 112.5V120" stroke="#000" stroke-width="1.2" fill="none"/><path d="M6 521H18L23.5 527L18 533H6Z" fill="#00ff00"/><path d="M6 532.5H18L23 527.3" stroke="#00ffff" stroke-width="1" fill="none"/><path d="M1088 521H1076L1070.5 526.7L1076 532.5H1088Z" fill="#00ff00"/><path d="M1079 523.5H1084.4M1081.7 523.5V530.5" stroke="#000" stroke-width="1.1" fill="none"/><polyline points="482.5,97 486,93.3 491,97.6 496,93.3" fill="none" stroke="#fff" stroke-width="1" shape-rendering="crispEdges"/><polyline points="496,93.3 501,97.6 506,93.3 511,97.6 516,93.3 521,97.6 526,93.3 531,97.6 536,93.3 541,97.6 546,93.3 551,97.6 556,93.3 561,97.6 566,93.3 571,97.6 576,93.3 581,97.6 586,93.3 591,97.6 596,93.3" fill="none" stroke="#00e000" stroke-width="1" shape-rendering="crispEdges"/><polyline points="596,93.3 601,97.6 606,93.3 610,96.5" fill="none" stroke="#fff" stroke-width="1" shape-rendering="crispEdges"/><path d="M483 88.5H481.5V102.5H483M609 88.5H610.5V102.5H609" stroke="#b0c4ff" stroke-width="1" fill="none" shape-rendering="crispEdges"/><path d="M543 83.8H548.4M545.7 83.8V89.2" stroke="#ffaa5a" stroke-width="1.1" fill="none"/><path d="M995 100.5H999.5V87.5H1003.5" stroke="#00ff00" stroke-width="1" fill="none"/><path d="M995.8 95.2L999.5 91L1003.2 95.2Z" fill="#00ff00"/><path d="M34.5 964.5H44.5" stroke="#00ff00" stroke-width="1" fill="none"/><path d="M35 960.5H44.5" stroke="#00ff00" stroke-width="1" stroke-dasharray="1.5 1.5" fill="none"/></svg>
<svg style="left:0;top:0" width="40" height="998"><path d="M11 525.2L12.9 523.4V530.6" stroke="#000" stroke-width="1.2" fill="none"/></svg>
<div class="t" style="left:31.00px;top:131px;font-size:12px;line-height:16px;color:#ff00ff;font-weight:400;letter-spacing:-0.391px;">Average: 1</div>
<div class="t" style="left:155.80px;top:877px;font-size:12px;line-height:16px;color:#00ff00;font-weight:400;letter-spacing:-0.016px;">CH1:Frequ = 13.9kHz</div>
<div class="t" style="left:676.80px;top:877px;font-size:12px;line-height:16px;color:#00ff00;font-weight:400;letter-spacing:0.038px;">CH1:Vamp = 5.13V</div>
<div class="t" style="left:173.50px;top:600px;font-size:18px;line-height:22px;color:#fff;font-weight:400;letter-spacing:0.789px;-webkit-text-stroke:0.3px #fff;">Switch is open.</div>
<div class="t" style="left:500.50px;top:602px;font-size:18px;line-height:22px;color:#fff;font-weight:400;letter-spacing:0.684px;-webkit-text-stroke:0.3px #fff;">User push switch.</div>
<div class="t" style="left:772.40px;top:599px;font-size:18px;line-height:22px;color:#fff;font-weight:400;letter-spacing:0.622px;-webkit-text-stroke:0.3px #fff;">Switch is closed.</div>
<div class="a" style="left:1011px;top:89px;width:19px;height:12px;background:#00ff00"></div>
<div class="t" style="left:1012.00px;top:88px;font-size:10px;line-height:13px;color:#000;font-weight:700;letter-spacing:-0.300px;transform:scaleX(0.8761);transform-origin:0 0;">CH1</div>
<div class="t" style="left:1039.70px;top:87px;font-size:12.5px;line-height:16px;color:#00ff00;font-weight:400;letter-spacing:-0.444px;">0.00uV</div>
<div class="a" style="left:8px;top:954px;width:25px;height:15px;background:#00ff00"></div>
<div class="t" style="left:9.00px;top:954px;font-size:12px;line-height:16px;color:#000;font-weight:400;letter-spacing:-0.300px;transform:scaleX(0.9827);transform-origin:0 0;">CH1</div>
<div class="t" style="left:48.90px;top:954px;font-size:12.5px;line-height:16px;color:#00ff00;font-weight:400;letter-spacing:-0.300px;transform:scaleX(0.9661);transform-origin:0 0;">2.00V</div>
<div class="t" style="left:992.50px;top:954px;font-size:12.5px;line-height:16px;color:#ffaa5a;font-weight:400;letter-spacing:-0.104px;">Time</div>
<div class="t" style="left:1032.50px;top:954px;font-size:12.5px;line-height:16px;color:#ffaa5a;font-weight:400;letter-spacing:-0.014px;">400us</div>
<div class="a" style="left:1088px;top:79px;width:2px;height:897px;background:#fff"></div>
<div class="a" style="left:1093px;top:88px;width:181px;height:98px;border:1px solid #d0d0bf;border-radius:3px"></div>
<div class="a" style="left:1158px;top:88px;width:52px;height:1px;background:#ece9d8;"></div>
<div class="t" style="left:1160.75px;top:81px;font-size:11px;line-height:14px;color:#0046d5;font-weight:400;letter-spacing:-0.225px;">Horizontal</div>
<div class="t" style="left:1104.10px;top:95px;font-size:11px;line-height:14px;color:#000;font-weight:400;letter-spacing:-0.300px;transform:scaleX(0.9664);transform-origin:0 0;">Time / DIV</div>
<div class="a" style="left:1102px;top:112px;width:61px;height:20px;border:1px solid #7f9db9;background:#fff"></div>
<div class="a" style="left:1148px;top:114px;width:13px;height:16px;border:1px solid #c0d0f8;border-radius:2px;background:linear-gradient(135deg,#cbd8fc 0%,#bccdfa 45%,#afc6f8 100%)"></div>
<svg style="left:0;top:0" width="1280" height="998"><path d="M1151.5 120.5L1155.5 124.5L1159.5 120.5" fill="none" stroke="#4d6185" stroke-width="2.2"/></svg>
<div class="t" style="left:1105.90px;top:116px;font-size:11px;line-height:14px;color:#000;font-weight:400;letter-spacing:-0.218px;">400us</div>
<div class="t" style="left:1104.75px;top:142px;font-size:11px;line-height:14px;color:#000;font-weight:400;letter-spacing:-0.300px;transform:scaleX(0.9749);transform-origin:0 0;">Format</div>
<div class="a" style="left:1102px;top:158px;width:61px;height:20px;border:1px solid #c9c7ba;background:#ece9d8;box-shadow:inset 0 0 0 1px #f3f2ea"></div>
<div class="a" style="left:1146px;top:159px;width:18px;height:20px;background:#fdfdfb"></div>
<div class="a" style="left:1148px;top:160px;width:15px;height:18px;border-radius:2px;background:linear-gradient(135deg,#f3f2ec,#e9e8e0)"></div>
<svg style="left:0;top:0" width="1280" height="998"><path d="M1151.5 166.5L1155.5 170.5L1159.5 166.5" fill="none" stroke="#c9c7ba" stroke-width="2.2"/></svg>
<div class="t" style="left:1105.70px;top:162px;font-size:11px;line-height:14px;color:#aca899;font-weight:400;letter-spacing:-0.009px;">Y - T</div>
<div class="a" style="left:1093px;top:200px;width:181px;height:220px;border:1px solid #d0d0bf;border-radius:3px"></div>
<div class="a" style="left:1164px;top:200px;width:42px;height:1px;background:#ece9d8;"></div>
<div class="t" style="left:1167.10px;top:193px;font-size:11px;line-height:14px;color:#0046d5;font-weight:400;letter-spacing:-0.025px;">Vertical</div>
<div class="a" style="left:1102px;top:212px;width:11px;height:11px;border:1px solid #1c5180;background:linear-gradient(135deg,#dcdcd7,#fff)"></div>
<svg style="left:0;top:0" width="1280" height="998"><path d="M1105 217.4L1107.5 220.9L1111.8 215" fill="none" stroke="#21a121" stroke-width="2"/></svg>
<div class="t" style="left:1117.70px;top:212px;font-size:11px;line-height:14px;color:#000;font-weight:400;letter-spacing:-0.300px;transform:scaleX(0.8456);transform-origin:0 0;">CH1</div>
<div class="a" style="left:1102px;top:230px;width:58px;height:20px;border:1px solid #7f9db9;background:#fff"></div>
<div class="a" style="left:1145px;top:232px;width:13px;height:16px;border:1px solid #c0d0f8;border-radius:2px;background:linear-gradient(135deg,#cbd8fc 0%,#bccdfa 45%,#afc6f8 100%)"></div>
<svg style="left:0;top:0" width="1280" height="998"><path d="M1148.5 238.5L1152.5 242.5L1156.5 238.5" fill="none" stroke="#4d6185" stroke-width="2.2"/></svg>
<div class="t" style="left:1105.60px;top:234px;font-size:11px;line-height:14px;color:#000;font-weight:400;letter-spacing:-0.012px;">2.00V</div>
<div class="a" style="left:1102px;top:258px;width:58px;height:20px;border:1px solid #7f9db9;background:#fff"></div>
<div class="a" style="left:1145px;top:260px;width:13px;height:16px;border:1px solid #c0d0f8;border-radius:2px;background:linear-gradient(135deg,#cbd8fc 0%,#bccdfa 45%,#afc6f8 100%)"></div>
<svg style="left:0;top:0" width="1280" height="998"><path d="M1148.5 266.5L1152.5 270.5L1156.5 266.5" fill="none" stroke="#4d6185" stroke-width="2.2"/></svg>
<div class="t" style="left:1105.60px;top:262px;font-size:11px;line-height:14px;color:#000;font-weight:400;letter-spacing:-0.300px;transform:scaleX(0.8789);transform-origin:0 0;">DC</div>
<div class="a" style="left:1102px;top:286px;width:58px;height:20px;border:1px solid #7f9db9;background:#fff"></div>
<div class="a" style="left:1145px;top:288px;width:13px;height:16px;border:1px solid #c0d0f8;border-radius:2px;background:linear-gradient(135deg,#cbd8fc 0%,#bccdfa 45%,#afc6f8 100%)"></div>
<svg style="left:0;top:0" width="1280" height="998"><path d="M1148.5 294.5L1152.5 298.5L1156.5 294.5" fill="none" stroke="#4d6185" stroke-width="2.2"/></svg>
<div class="t" style="left:1105.60px;top:290px;font-size:11px;line-height:14px;color:#000;font-weight:400;letter-spacing:-0.300px;transform:scaleX(0.9450);transform-origin:0 0;">x 1</div>
<div class="a" style="left:1101px;top:319px;width:11px;height:11px;border:1px solid #1c5180;background:linear-gradient(135deg,#dcdcd7,#fff)"></div>
<div class="t" style="left:1116.80px;top:319px;font-size:11px;line-height:14px;color:#000;font-weight:400;letter-spacing:-0.300px;transform:scaleX(0.9110);transform-origin:0 0;">CH2</div>
<div class="a" style="left:1101px;top:336px;width:58px;height:20px;border:1px solid #c9c7ba;background:#ece9d8;box-shadow:inset 0 0 0 1px #f3f2ea"></div>
<div class="a" style="left:1142px;top:337px;width:18px;height:20px;background:#fdfdfb"></div>
<div class="a" style="left:1144px;top:338px;width:15px;height:18px;border-radius:2px;background:linear-gradient(135deg,#f3f2ec,#e9e8e0)"></div>
<svg style="left:0;top:0" width="1280" height="998"><path d="M1147.5 344.5L1151.5 348.5L1155.5 344.5" fill="none" stroke="#c9c7ba" stroke-width="2.2"/></svg>
<div class="t" style="left:1104.75px;top:340px;font-size:11px;line-height:14px;color:#aca899;font-weight:400;letter-spacing:-0.074px;">1.00V</div>
<div class="a" style="left:1101px;top:364px;width:58px;height:20px;border:1px solid #c9c7ba;background:#ece9d8;box-shadow:inset 0 0 0 1px #f3f2ea"></div>
<div class="a" style="left:1142px;top:365px;width:18px;height:20px;background:#fdfdfb"></div>
<div class="a" style="left:1144px;top:366px;width:15px;height:18px;border-radius:2px;background:linear-gradient(135deg,#f3f2ec,#e9e8e0)"></div>
<svg style="left:0;top:0" width="1280" height="998"><path d="M1147.5 372.5L1151.5 376.5L1155.5 372.5" fill="none" stroke="#c9c7ba" stroke-width="2.2"/></svg>
<div class="t" style="left:1104.90px;top:368px;font-size:11px;line-height:14px;color:#aca899;font-weight:400;letter-spacing:-0.300px;transform:scaleX(0.9512);transform-origin:0 0;">AC</div>
<div class="a" style="left:1101px;top:392px;width:58px;height:20px;border:1px solid #c9c7ba;background:#ece9d8;box-shadow:inset 0 0 0 1px #f3f2ea"></div>
<div class="a" style="left:1142px;top:393px;width:18px;height:20px;background:#fdfdfb"></div>
<div class="a" style="left:1144px;top:394px;width:15px;height:18px;border-radius:2px;background:linear-gradient(135deg,#f3f2ec,#e9e8e0)"></div>
<svg style="left:0;top:0" width="1280" height="998"><path d="M1147.5 400.5L1151.5 404.5L1155.5 400.5" fill="none" stroke="#c9c7ba" stroke-width="2.2"/></svg>
<div class="t" style="left:1104.90px;top:396px;font-size:11px;line-height:14px;color:#aca899;font-weight:400;letter-spacing:-0.300px;transform:scaleX(0.8811);transform-origin:0 0;">x 1</div>
<div class="a" style="left:1093px;top:434px;width:181px;height:136px;border:1px solid #d0d0bf;border-radius:3px"></div>
<div class="a" style="left:1165px;top:434px;width:38px;height:1px;background:#ece9d8;"></div>
<div class="t" style="left:1168.40px;top:427px;font-size:11px;line-height:14px;color:#0046d5;font-weight:400;letter-spacing:-0.339px;">Trigger</div>
<div class="t" style="left:1102.20px;top:455px;font-size:11px;line-height:14px;color:#000;font-weight:400;letter-spacing:-0.264px;">Trigger Mode</div>
<div class="a" style="left:1195px;top:452px;width:60px;height:20px;border:1px solid #7f9db9;background:#fff"></div>
<div class="a" style="left:1240px;top:454px;width:13px;height:16px;border:1px solid #c0d0f8;border-radius:2px;background:linear-gradient(135deg,#cbd8fc 0%,#bccdfa 45%,#afc6f8 100%)"></div>
<svg style="left:0;top:0" width="1280" height="998"><path d="M1243.5 460.5L1247.5 464.5L1251.5 460.5" fill="none" stroke="#4d6185" stroke-width="2.2"/></svg>
<div class="t" style="left:1198.60px;top:456px;font-size:11px;line-height:14px;color:#000;font-weight:400;letter-spacing:-0.300px;transform:scaleX(0.9520);transform-origin:0 0;">Edge</div>
<div class="t" style="left:1102.20px;top:485px;font-size:11px;line-height:14px;color:#000;font-weight:400;letter-spacing:-0.002px;">Trigger Sweep</div>
<div class="a" style="left:1195px;top:482px;width:60px;height:20px;border:1px solid #7f9db9;background:#fff"></div>
<div class="a" style="left:1240px;top:484px;width:13px;height:16px;border:1px solid #c0d0f8;border-radius:2px;background:linear-gradient(135deg,#cbd8fc 0%,#bccdfa 45%,#afc6f8 100%)"></div>
<svg style="left:0;top:0" width="1280" height="998"><path d="M1243.5 490.5L1247.5 494.5L1251.5 490.5" fill="none" stroke="#4d6185" stroke-width="2.2"/></svg>
<div class="t" style="left:1198.60px;top:486px;font-size:11px;line-height:14px;color:#000;font-weight:400;letter-spacing:-0.376px;">Single</div>
<div class="t" style="left:1102.20px;top:514px;font-size:11px;line-height:14px;color:#000;font-weight:400;letter-spacing:-0.096px;">Trigger Source</div>
<div class="a" style="left:1195px;top:511px;width:60px;height:20px;border:1px solid #7f9db9;background:#fff"></div>
<div class="a" style="left:1240px;top:513px;width:13px;height:16px;border:1px solid #c0d0f8;border-radius:2px;background:linear-gradient(135deg,#cbd8fc 0%,#bccdfa 45%,#afc6f8 100%)"></div>
<svg style="left:0;top:0" width="1280" height="998"><path d="M1243.5 519.5L1247.5 523.5L1251.5 519.5" fill="none" stroke="#4d6185" stroke-width="2.2"/></svg>
<div class="t" style="left:1198.60px;top:514px;font-size:11px;line-height:14px;color:#000;font-weight:400;letter-spacing:-0.300px;transform:scaleX(0.8456);transform-origin:0 0;">CH1</div>
<div class="t" style="left:1102.20px;top:544px;font-size:11px;line-height:14px;color:#000;font-weight:400;letter-spacing:-0.235px;">Trigger Slope</div>
<div class="a" style="left:1195px;top:541px;width:60px;height:20px;border:1px solid #7f9db9;background:#fff"></div>
<div class="a" style="left:1240px;top:543px;width:13px;height:16px;border:1px solid #c0d0f8;border-radius:2px;background:linear-gradient(135deg,#cbd8fc 0%,#bccdfa 45%,#afc6f8 100%)"></div>
<svg style="left:0;top:0" width="1280" height="998"><path d="M1243.5 549.5L1247.5 553.5L1251.5 549.5" fill="none" stroke="#4d6185" stroke-width="2.2"/></svg>
<div class="t" style="left:1198.60px;top:545px;font-size:11px;line-height:14px;color:#000;font-weight:400;letter-spacing:0.000px;">+</div>
<svg style="left:0;top:0" width="1280" height="998" shape-rendering="crispEdges"><ellipse cx="1223.5" cy="140.5" rx="28" ry="27" fill="#3333ff"/><path d="M1219 104.5h9M1214 105.5h5M1228 105.5h5M1211 106.5h3M1233 106.5h3M1208 107.5h3M1218 107.5h11M1236 107.5h3M1206 108.5h2M1214 108.5h4M1229 108.5h4M1239 108.5h2M1204 109.5h2M1211 109.5h3M1233 109.5h3M1241 109.5h2M1203 110.5h1M1208 110.5h3M1236 110.5h3M1243 110.5h1M1201 111.5h2M1206 111.5h2M1239 111.5h2M1244 111.5h2M1200 112.5h1M1205 112.5h1M1241 112.5h1M1246 112.5h1M1199 113.5h1M1203 113.5h2M1218 113.5h11M1242 113.5h2M1247 113.5h1M1198 114.5h1M1202 114.5h1M1214 114.5h4M1229 114.5h4M1244 114.5h1M1248 114.5h1M1197 115.5h1M1201 115.5h1M1212 115.5h2M1233 115.5h2M1245 115.5h1M1249 115.5h1M1196 116.5h1M1200 116.5h1M1210 116.5h2M1235 116.5h2M1246 116.5h1M1250 116.5h1M1195 117.5h1M1199 117.5h1M1208 117.5h2M1237 117.5h2M1246 117.5h2M1251 117.5h1M1194 118.5h1M1198 118.5h1M1206 118.5h2M1239 118.5h2M1245 118.5h2M1248 118.5h1M1252 118.5h1M1193 119.5h1M1197 119.5h1M1205 119.5h1M1241 119.5h1M1244 119.5h2M1249 119.5h1M1253 119.5h1M1192 120.5h1M1196 120.5h1M1204 120.5h1M1242 120.5h3M1250 120.5h1M1254 120.5h1M1192 121.5h1M1195 121.5h1M1203 121.5h1M1243 121.5h1M1251 121.5h1M1254 121.5h1M1191 122.5h1M1195 122.5h1M1202 122.5h1M1244 122.5h1M1251 122.5h1M1255 122.5h1M1191 123.5h1M1194 123.5h1M1201 123.5h1M1245 123.5h1M1252 123.5h1M1255 123.5h1M1190 124.5h1M1193 124.5h1M1200 124.5h1M1246 124.5h1M1253 124.5h1M1256 124.5h1M1190 125.5h1M1193 125.5h1M1200 125.5h1M1246 125.5h1M1253 125.5h1M1256 125.5h1M1189 126.5h1M1192 126.5h1M1199 126.5h1M1247 126.5h1M1254 126.5h1M1257 126.5h1M1189 127.5h1M1192 127.5h1M1198 127.5h1M1248 127.5h1M1254 127.5h1M1257 127.5h1M1188 128.5h1M1191 128.5h1M1198 128.5h1M1248 128.5h1M1255 128.5h1M1258 128.5h1M1188 129.5h1M1191 129.5h1M1197 129.5h1M1249 129.5h1M1255 129.5h1M1258 129.5h1M1188 130.5h1M1191 130.5h1M1197 130.5h1M1249 130.5h1M1255 130.5h1M1258 130.5h1M1187 131.5h1M1190 131.5h1M1197 131.5h1M1249 131.5h1M1256 131.5h1M1259 131.5h1M1187 132.5h1M1190 132.5h1M1196 132.5h1M1250 132.5h1M1256 132.5h1M1259 132.5h1M1187 133.5h1M1190 133.5h1M1196 133.5h1M1250 133.5h1M1256 133.5h1M1259 133.5h1M1187 134.5h1M1190 134.5h1M1196 134.5h1M1250 134.5h1M1256 134.5h1M1259 134.5h1M1187 135.5h1M1189 135.5h1M1195 135.5h1M1251 135.5h1M1257 135.5h1M1259 135.5h1M1186 136.5h1M1189 136.5h1M1195 136.5h1M1251 136.5h1M1257 136.5h1M1260 136.5h1M1186 137.5h1M1189 137.5h1M1195 137.5h1M1251 137.5h1M1257 137.5h1M1260 137.5h1M1186 138.5h1M1189 138.5h1M1195 138.5h1M1251 138.5h1M1257 138.5h1M1260 138.5h1M1186 139.5h1M1189 139.5h1M1195 139.5h1M1251 139.5h1M1257 139.5h1M1260 139.5h1M1186 140.5h1M1189 140.5h1M1195 140.5h1M1251 140.5h1M1257 140.5h1M1260 140.5h1M1186 141.5h1M1189 141.5h1M1195 141.5h1M1251 141.5h1M1257 141.5h1M1260 141.5h1M1186 142.5h1M1189 142.5h1M1195 142.5h1M1251 142.5h1M1257 142.5h1M1260 142.5h1M1186 143.5h1M1189 143.5h1M1195 143.5h1M1251 143.5h1M1257 143.5h1M1260 143.5h1M1186 144.5h1M1189 144.5h1M1195 144.5h1M1251 144.5h1M1257 144.5h1M1260 144.5h1M1187 145.5h1M1189 145.5h1M1195 145.5h1M1251 145.5h1M1257 145.5h1M1259 145.5h1M1187 146.5h1M1190 146.5h1M1196 146.5h1M1250 146.5h1M1256 146.5h1M1259 146.5h1M1187 147.5h1M1190 147.5h1M1196 147.5h1M1250 147.5h1M1256 147.5h1M1259 147.5h1M1187 148.5h1M1190 148.5h1M1196 148.5h1M1250 148.5h1M1256 148.5h1M1259 148.5h1M1187 149.5h1M1190 149.5h1M1197 149.5h1M1249 149.5h1M1256 149.5h1M1259 149.5h1M1188 150.5h1M1191 150.5h1M1197 150.5h1M1249 150.5h1M1255 150.5h1M1258 150.5h1M1188 151.5h1M1191 151.5h1M1197 151.5h1M1249 151.5h1M1255 151.5h1M1258 151.5h1M1188 152.5h1M1191 152.5h1M1198 152.5h1M1248 152.5h1M1255 152.5h1M1258 152.5h1M1189 153.5h1M1192 153.5h1M1198 153.5h1M1248 153.5h1M1254 153.5h1M1257 153.5h1M1189 154.5h1M1192 154.5h1M1199 154.5h1M1247 154.5h1M1254 154.5h1M1257 154.5h1M1190 155.5h1M1193 155.5h1M1200 155.5h1M1246 155.5h1M1253 155.5h1M1256 155.5h1M1190 156.5h1M1193 156.5h1M1200 156.5h1M1246 156.5h1M1253 156.5h1M1256 156.5h1M1191 157.5h1M1194 157.5h1M1201 157.5h1M1245 157.5h1M1252 157.5h1M1255 157.5h1M1191 158.5h1M1195 158.5h1M1202 158.5h1M1244 158.5h1M1251 158.5h1M1255 158.5h1M1192 159.5h1M1195 159.5h1M1202 159.5h2M1243 159.5h1M1251 159.5h1M1254 159.5h1M1192 160.5h1M1196 160.5h1M1201 160.5h2M1204 160.5h1M1242 160.5h1M1250 160.5h1M1254 160.5h1M1193 161.5h1M1197 161.5h1M1200 161.5h2M1205 161.5h1M1241 161.5h1M1249 161.5h1M1253 161.5h1M1194 162.5h1M1198 162.5h3M1206 162.5h2M1239 162.5h2M1248 162.5h1M1252 162.5h1M1195 163.5h1M1198 163.5h2M1208 163.5h2M1237 163.5h2M1247 163.5h2M1251 163.5h1M1196 164.5h3M1200 164.5h1M1210 164.5h2M1235 164.5h2M1246 164.5h1M1248 164.5h3M1196 165.5h2M1201 165.5h1M1212 165.5h2M1233 165.5h2M1245 165.5h1M1249 165.5h2M1195 166.5h2M1202 166.5h1M1214 166.5h4M1229 166.5h4M1244 166.5h1M1250 166.5h2M1194 167.5h2M1203 167.5h2M1218 167.5h11M1242 167.5h2M1251 167.5h2M1193 168.5h2M1205 168.5h1M1241 168.5h1M1252 168.5h2M1192 169.5h2M1206 169.5h2M1239 169.5h2M1253 169.5h2M1191 170.5h2M1208 170.5h3M1236 170.5h3M1254 170.5h2M1211 171.5h3M1233 171.5h3M1214 172.5h4M1229 172.5h4M1218 173.5h11" stroke="#000" stroke-width="1" fill="none"/><path d="M1219 105.5h9M1214 106.5h19M1211 107.5h7M1229 107.5h7M1208 108.5h6M1233 108.5h6M1206 109.5h5M1236 109.5h5M1204 110.5h4M1239 110.5h4M1203 111.5h3M1241 111.5h3M1201 112.5h4M1242 112.5h4M1200 113.5h3M1244 113.5h3M1199 114.5h3M1245 114.5h3M1198 115.5h3M1246 115.5h3M1197 116.5h3M1247 116.5h3M1196 117.5h3M1248 117.5h3M1195 118.5h3M1249 118.5h3M1194 119.5h3M1250 119.5h3M1193 120.5h3M1251 120.5h3M1193 121.5h2M1252 121.5h2M1192 122.5h3M1252 122.5h3M1192 123.5h2M1253 123.5h2M1191 124.5h2M1254 124.5h2M1191 125.5h2M1254 125.5h2M1190 126.5h2M1255 126.5h2M1190 127.5h2M1255 127.5h2M1189 128.5h2M1256 128.5h2M1189 129.5h2M1256 129.5h2M1189 130.5h2M1256 130.5h2M1188 131.5h2M1257 131.5h2M1188 132.5h2M1257 132.5h2M1188 133.5h2M1257 133.5h2M1188 134.5h2M1257 134.5h2M1188 135.5h1M1258 135.5h1M1187 136.5h2M1258 136.5h2M1187 137.5h2M1258 137.5h2M1187 138.5h2M1258 138.5h2M1187 139.5h2M1258 139.5h2M1187 140.5h2M1258 140.5h2M1187 141.5h2M1258 141.5h2M1187 142.5h2M1258 142.5h2M1187 143.5h2M1258 143.5h2M1187 144.5h2M1258 144.5h2M1188 145.5h1M1258 145.5h1M1188 146.5h2M1257 146.5h2M1188 147.5h2M1257 147.5h2M1188 148.5h2M1257 148.5h2M1188 149.5h2M1257 149.5h2M1189 150.5h2M1256 150.5h2M1189 151.5h2M1256 151.5h2M1189 152.5h2M1256 152.5h2M1190 153.5h2M1255 153.5h2M1190 154.5h2M1255 154.5h2M1191 155.5h2M1254 155.5h2M1191 156.5h2M1254 156.5h2M1192 157.5h2M1253 157.5h2M1192 158.5h3M1252 158.5h3M1193 159.5h2M1252 159.5h2M1193 160.5h3M1251 160.5h3M1194 161.5h3M1250 161.5h3M1195 162.5h3M1249 162.5h3M1196 163.5h2M1249 163.5h2" stroke="#fffbe6" stroke-width="1" fill="none"/><path d="M1218 108.5h11M1214 109.5h19M1211 110.5h25M1208 111.5h31M1206 112.5h35M1205 113.5h13M1229 113.5h13M1203 114.5h11M1233 114.5h11M1202 115.5h10M1235 115.5h10M1201 116.5h9M1237 116.5h9M1200 117.5h8M1239 117.5h7M1199 118.5h7M1241 118.5h4M1198 119.5h7M1242 119.5h2M1197 120.5h7M1196 121.5h7M1196 122.5h6M1195 123.5h6M1194 124.5h6M1194 125.5h6M1193 126.5h6M1193 127.5h5M1192 128.5h6M1192 129.5h5M1192 130.5h5M1191 131.5h6M1191 132.5h5M1191 133.5h5M1191 134.5h5M1190 135.5h5M1190 136.5h5M1190 137.5h5M1190 138.5h5M1190 139.5h5M1190 140.5h5M1190 141.5h5M1190 142.5h5M1190 143.5h5M1190 144.5h5M1190 145.5h5M1191 146.5h5M1191 147.5h5M1191 148.5h5M1191 149.5h6M1192 150.5h5M1192 151.5h5M1192 152.5h6M1193 153.5h5M1193 154.5h6M1194 155.5h6M1194 156.5h6M1195 157.5h6M1196 158.5h6M1196 159.5h6M1197 160.5h4M1198 161.5h2" stroke="#d2d2d2" stroke-width="1" fill="none"/><path d="M1247 118.5h1M1246 119.5h3M1245 120.5h5M1244 121.5h7M1245 122.5h6M1246 123.5h6M1247 124.5h6M1247 125.5h6M1248 126.5h6M1249 127.5h5M1249 128.5h6M1250 129.5h5M1250 130.5h5M1250 131.5h6M1251 132.5h5M1251 133.5h5M1251 134.5h5M1252 135.5h5M1252 136.5h5M1252 137.5h5M1252 138.5h5M1252 139.5h5M1252 140.5h5M1252 141.5h5M1252 142.5h5M1252 143.5h5M1252 144.5h5M1252 145.5h5M1251 146.5h5M1251 147.5h5M1251 148.5h5M1250 149.5h6M1250 150.5h5M1250 151.5h5M1249 152.5h6M1249 153.5h5M1248 154.5h6M1247 155.5h6M1247 156.5h6M1246 157.5h6M1245 158.5h6M1244 159.5h7M1203 160.5h1M1243 160.5h7M1202 161.5h3M1242 161.5h7M1201 162.5h5M1241 162.5h7M1200 163.5h8M1239 163.5h8M1201 164.5h9M1237 164.5h9M1202 165.5h10M1235 165.5h10M1203 166.5h11M1233 166.5h11M1205 167.5h13M1229 167.5h13M1206 168.5h35M1208 169.5h31M1211 170.5h25M1214 171.5h19M1218 172.5h11" stroke="#b4b4b4" stroke-width="1" fill="none"/><path d="M1226.2 135.2L1234.2 120.5" stroke="#fff" stroke-width="1.9" shape-rendering="auto"/></svg>
<svg style="left:0;top:0" width="1280" height="998" shape-rendering="crispEdges"><ellipse cx="1223.5" cy="266.5" rx="28" ry="27" fill="#00ff00"/><path d="M1219 230.5h9M1214 231.5h5M1228 231.5h5M1211 232.5h3M1233 232.5h3M1208 233.5h3M1218 233.5h11M1236 233.5h3M1206 234.5h2M1214 234.5h4M1229 234.5h4M1239 234.5h2M1204 235.5h2M1211 235.5h3M1233 235.5h3M1241 235.5h2M1203 236.5h1M1208 236.5h3M1236 236.5h3M1243 236.5h1M1201 237.5h2M1206 237.5h2M1239 237.5h2M1244 237.5h2M1200 238.5h1M1205 238.5h1M1241 238.5h1M1246 238.5h1M1199 239.5h1M1203 239.5h2M1218 239.5h11M1242 239.5h2M1247 239.5h1M1198 240.5h1M1202 240.5h1M1214 240.5h4M1229 240.5h4M1244 240.5h1M1248 240.5h1M1197 241.5h1M1201 241.5h1M1212 241.5h2M1233 241.5h2M1245 241.5h1M1249 241.5h1M1196 242.5h1M1200 242.5h1M1210 242.5h2M1235 242.5h2M1246 242.5h1M1250 242.5h1M1195 243.5h1M1199 243.5h1M1208 243.5h2M1237 243.5h2M1246 243.5h2M1251 243.5h1M1194 244.5h1M1198 244.5h1M1206 244.5h2M1239 244.5h2M1245 244.5h2M1248 244.5h1M1252 244.5h1M1193 245.5h1M1197 245.5h1M1205 245.5h1M1241 245.5h1M1244 245.5h2M1249 245.5h1M1253 245.5h1M1192 246.5h1M1196 246.5h1M1204 246.5h1M1242 246.5h3M1250 246.5h1M1254 246.5h1M1192 247.5h1M1195 247.5h1M1203 247.5h1M1243 247.5h1M1251 247.5h1M1254 247.5h1M1191 248.5h1M1195 248.5h1M1202 248.5h1M1244 248.5h1M1251 248.5h1M1255 248.5h1M1191 249.5h1M1194 249.5h1M1201 249.5h1M1245 249.5h1M1252 249.5h1M1255 249.5h1M1190 250.5h1M1193 250.5h1M1200 250.5h1M1246 250.5h1M1253 250.5h1M1256 250.5h1M1190 251.5h1M1193 251.5h1M1200 251.5h1M1246 251.5h1M1253 251.5h1M1256 251.5h1M1189 252.5h1M1192 252.5h1M1199 252.5h1M1247 252.5h1M1254 252.5h1M1257 252.5h1M1189 253.5h1M1192 253.5h1M1198 253.5h1M1248 253.5h1M1254 253.5h1M1257 253.5h1M1188 254.5h1M1191 254.5h1M1198 254.5h1M1248 254.5h1M1255 254.5h1M1258 254.5h1M1188 255.5h1M1191 255.5h1M1197 255.5h1M1249 255.5h1M1255 255.5h1M1258 255.5h1M1188 256.5h1M1191 256.5h1M1197 256.5h1M1249 256.5h1M1255 256.5h1M1258 256.5h1M1187 257.5h1M1190 257.5h1M1197 257.5h1M1249 257.5h1M1256 257.5h1M1259 257.5h1M1187 258.5h1M1190 258.5h1M1196 258.5h1M1250 258.5h1M1256 258.5h1M1259 258.5h1M1187 259.5h1M1190 259.5h1M1196 259.5h1M1250 259.5h1M1256 259.5h1M1259 259.5h1M1187 260.5h1M1190 260.5h1M1196 260.5h1M1250 260.5h1M1256 260.5h1M1259 260.5h1M1187 261.5h1M1189 261.5h1M1195 261.5h1M1251 261.5h1M1257 261.5h1M1259 261.5h1M1186 262.5h1M1189 262.5h1M1195 262.5h1M1251 262.5h1M1257 262.5h1M1260 262.5h1M1186 263.5h1M1189 263.5h1M1195 263.5h1M1251 263.5h1M1257 263.5h1M1260 263.5h1M1186 264.5h1M1189 264.5h1M1195 264.5h1M1251 264.5h1M1257 264.5h1M1260 264.5h1M1186 265.5h1M1189 265.5h1M1195 265.5h1M1251 265.5h1M1257 265.5h1M1260 265.5h1M1186 266.5h1M1189 266.5h1M1195 266.5h1M1251 266.5h1M1257 266.5h1M1260 266.5h1M1186 267.5h1M1189 267.5h1M1195 267.5h1M1251 267.5h1M1257 267.5h1M1260 267.5h1M1186 268.5h1M1189 268.5h1M1195 268.5h1M1251 268.5h1M1257 268.5h1M1260 268.5h1M1186 269.5h1M1189 269.5h1M1195 269.5h1M1251 269.5h1M1257 269.5h1M1260 269.5h1M1186 270.5h1M1189 270.5h1M1195 270.5h1M1251 270.5h1M1257 270.5h1M1260 270.5h1M1187 271.5h1M1189 271.5h1M1195 271.5h1M1251 271.5h1M1257 271.5h1M1259 271.5h1M1187 272.5h1M1190 272.5h1M1196 272.5h1M1250 272.5h1M1256 272.5h1M1259 272.5h1M1187 273.5h1M1190 273.5h1M1196 273.5h1M1250 273.5h1M1256 273.5h1M1259 273.5h1M1187 274.5h1M1190 274.5h1M1196 274.5h1M1250 274.5h1M1256 274.5h1M1259 274.5h1M1187 275.5h1M1190 275.5h1M1197 275.5h1M1249 275.5h1M1256 275.5h1M1259 275.5h1M1188 276.5h1M1191 276.5h1M1197 276.5h1M1249 276.5h1M1255 276.5h1M1258 276.5h1M1188 277.5h1M1191 277.5h1M1197 277.5h1M1249 277.5h1M1255 277.5h1M1258 277.5h1M1188 278.5h1M1191 278.5h1M1198 278.5h1M1248 278.5h1M1255 278.5h1M1258 278.5h1M1189 279.5h1M1192 279.5h1M1198 279.5h1M1248 279.5h1M1254 279.5h1M1257 279.5h1M1189 280.5h1M1192 280.5h1M1199 280.5h1M1247 280.5h1M1254 280.5h1M1257 280.5h1M1190 281.5h1M1193 281.5h1M1200 281.5h1M1246 281.5h1M1253 281.5h1M1256 281.5h1M1190 282.5h1M1193 282.5h1M1200 282.5h1M1246 282.5h1M1253 282.5h1M1256 282.5h1M1191 283.5h1M1194 283.5h1M1201 283.5h1M1245 283.5h1M1252 283.5h1M1255 283.5h1M1191 284.5h1M1195 284.5h1M1202 284.5h1M1244 284.5h1M1251 284.5h1M1255 284.5h1M1192 285.5h1M1195 285.5h1M1202 285.5h2M1243 285.5h1M1251 285.5h1M1254 285.5h1M1192 286.5h1M1196 286.5h1M1201 286.5h2M1204 286.5h1M1242 286.5h1M1250 286.5h1M1254 286.5h1M1193 287.5h1M1197 287.5h1M1200 287.5h2M1205 287.5h1M1241 287.5h1M1249 287.5h1M1253 287.5h1M1194 288.5h1M1198 288.5h3M1206 288.5h2M1239 288.5h2M1248 288.5h1M1252 288.5h1M1195 289.5h1M1198 289.5h2M1208 289.5h2M1237 289.5h2M1247 289.5h2M1251 289.5h1M1196 290.5h3M1200 290.5h1M1210 290.5h2M1235 290.5h2M1246 290.5h1M1248 290.5h3M1196 291.5h2M1201 291.5h1M1212 291.5h2M1233 291.5h2M1245 291.5h1M1249 291.5h2M1195 292.5h2M1202 292.5h1M1214 292.5h4M1229 292.5h4M1244 292.5h1M1250 292.5h2M1194 293.5h2M1203 293.5h2M1218 293.5h11M1242 293.5h2M1251 293.5h2M1193 294.5h2M1205 294.5h1M1241 294.5h1M1252 294.5h2M1192 295.5h2M1206 295.5h2M1239 295.5h2M1253 295.5h2M1191 296.5h2M1208 296.5h3M1236 296.5h3M1254 296.5h2M1211 297.5h3M1233 297.5h3M1214 298.5h4M1229 298.5h4M1218 299.5h11" stroke="#000" stroke-width="1" fill="none"/><path d="M1219 231.5h9M1214 232.5h19M1211 233.5h7M1229 233.5h7M1208 234.5h6M1233 234.5h6M1206 235.5h5M1236 235.5h5M1204 236.5h4M1239 236.5h4M1203 237.5h3M1241 237.5h3M1201 238.5h4M1242 238.5h4M1200 239.5h3M1244 239.5h3M1199 240.5h3M1245 240.5h3M1198 241.5h3M1246 241.5h3M1197 242.5h3M1247 242.5h3M1196 243.5h3M1248 243.5h3M1195 244.5h3M1249 244.5h3M1194 245.5h3M1250 245.5h3M1193 246.5h3M1251 246.5h3M1193 247.5h2M1252 247.5h2M1192 248.5h3M1252 248.5h3M1192 249.5h2M1253 249.5h2M1191 250.5h2M1254 250.5h2M1191 251.5h2M1254 251.5h2M1190 252.5h2M1255 252.5h2M1190 253.5h2M1255 253.5h2M1189 254.5h2M1256 254.5h2M1189 255.5h2M1256 255.5h2M1189 256.5h2M1256 256.5h2M1188 257.5h2M1257 257.5h2M1188 258.5h2M1257 258.5h2M1188 259.5h2M1257 259.5h2M1188 260.5h2M1257 260.5h2M1188 261.5h1M1258 261.5h1M1187 262.5h2M1258 262.5h2M1187 263.5h2M1258 263.5h2M1187 264.5h2M1258 264.5h2M1187 265.5h2M1258 265.5h2M1187 266.5h2M1258 266.5h2M1187 267.5h2M1258 267.5h2M1187 268.5h2M1258 268.5h2M1187 269.5h2M1258 269.5h2M1187 270.5h2M1258 270.5h2M1188 271.5h1M1258 271.5h1M1188 272.5h2M1257 272.5h2M1188 273.5h2M1257 273.5h2M1188 274.5h2M1257 274.5h2M1188 275.5h2M1257 275.5h2M1189 276.5h2M1256 276.5h2M1189 277.5h2M1256 277.5h2M1189 278.5h2M1256 278.5h2M1190 279.5h2M1255 279.5h2M1190 280.5h2M1255 280.5h2M1191 281.5h2M1254 281.5h2M1191 282.5h2M1254 282.5h2M1192 283.5h2M1253 283.5h2M1192 284.5h3M1252 284.5h3M1193 285.5h2M1252 285.5h2M1193 286.5h3M1251 286.5h3M1194 287.5h3M1250 287.5h3M1195 288.5h3M1249 288.5h3M1196 289.5h2M1249 289.5h2" stroke="#fffbe6" stroke-width="1" fill="none"/><path d="M1218 234.5h11M1214 235.5h19M1211 236.5h25M1208 237.5h31M1206 238.5h35M1205 239.5h13M1229 239.5h13M1203 240.5h11M1233 240.5h11M1202 241.5h10M1235 241.5h10M1201 242.5h9M1237 242.5h9M1200 243.5h8M1239 243.5h7M1199 244.5h7M1241 244.5h4M1198 245.5h7M1242 245.5h2M1197 246.5h7M1196 247.5h7M1196 248.5h6M1195 249.5h6M1194 250.5h6M1194 251.5h6M1193 252.5h6M1193 253.5h5M1192 254.5h6M1192 255.5h5M1192 256.5h5M1191 257.5h6M1191 258.5h5M1191 259.5h5M1191 260.5h5M1190 261.5h5M1190 262.5h5M1190 263.5h5M1190 264.5h5M1190 265.5h5M1190 266.5h5M1190 267.5h5M1190 268.5h5M1190 269.5h5M1190 270.5h5M1190 271.5h5M1191 272.5h5M1191 273.5h5M1191 274.5h5M1191 275.5h6M1192 276.5h5M1192 277.5h5M1192 278.5h6M1193 279.5h5M1193 280.5h6M1194 281.5h6M1194 282.5h6M1195 283.5h6M1196 284.5h6M1196 285.5h6M1197 286.5h4M1198 287.5h2" stroke="#d2d2d2" stroke-width="1" fill="none"/><path d="M1247 244.5h1M1246 245.5h3M1245 246.5h5M1244 247.5h7M1245 248.5h6M1246 249.5h6M1247 250.5h6M1247 251.5h6M1248 252.5h6M1249 253.5h5M1249 254.5h6M1250 255.5h5M1250 256.5h5M1250 257.5h6M1251 258.5h5M1251 259.5h5M1251 260.5h5M1252 261.5h5M1252 262.5h5M1252 263.5h5M1252 264.5h5M1252 265.5h5M1252 266.5h5M1252 267.5h5M1252 268.5h5M1252 269.5h5M1252 270.5h5M1252 271.5h5M1251 272.5h5M1251 273.5h5M1251 274.5h5M1250 275.5h6M1250 276.5h5M1250 277.5h5M1249 278.5h6M1249 279.5h5M1248 280.5h6M1247 281.5h6M1247 282.5h6M1246 283.5h6M1245 284.5h6M1244 285.5h7M1203 286.5h1M1243 286.5h7M1202 287.5h3M1242 287.5h7M1201 288.5h5M1241 288.5h7M1200 289.5h8M1239 289.5h8M1201 290.5h9M1237 290.5h9M1202 291.5h10M1235 291.5h10M1203 292.5h11M1233 292.5h11M1205 293.5h13M1229 293.5h13M1206 294.5h35M1208 295.5h31M1211 296.5h25M1214 297.5h19M1218 298.5h11" stroke="#b4b4b4" stroke-width="1" fill="none"/><path d="M1200.3 268.9L1216.5 267.1" stroke="#fff" stroke-width="1.9" shape-rendering="auto"/></svg>
<svg style="left:0;top:0" width="1280" height="998" shape-rendering="crispEdges"><ellipse cx="1223.5" cy="371.5" rx="28" ry="27" fill="#999999"/><path d="M1219 335.5h9M1214 336.5h5M1228 336.5h5M1211 337.5h3M1233 337.5h3M1208 338.5h3M1218 338.5h11M1236 338.5h3M1206 339.5h2M1214 339.5h4M1229 339.5h4M1239 339.5h2M1204 340.5h2M1211 340.5h3M1233 340.5h3M1241 340.5h2M1203 341.5h1M1208 341.5h3M1236 341.5h3M1243 341.5h1M1201 342.5h2M1206 342.5h2M1239 342.5h2M1244 342.5h2M1200 343.5h1M1205 343.5h1M1241 343.5h1M1246 343.5h1M1199 344.5h1M1203 344.5h2M1218 344.5h11M1242 344.5h2M1247 344.5h1M1198 345.5h1M1202 345.5h1M1214 345.5h4M1229 345.5h4M1244 345.5h1M1248 345.5h1M1197 346.5h1M1201 346.5h1M1212 346.5h2M1233 346.5h2M1245 346.5h1M1249 346.5h1M1196 347.5h1M1200 347.5h1M1210 347.5h2M1235 347.5h2M1246 347.5h1M1250 347.5h1M1195 348.5h1M1199 348.5h1M1208 348.5h2M1237 348.5h2M1246 348.5h2M1251 348.5h1M1194 349.5h1M1198 349.5h1M1206 349.5h2M1239 349.5h2M1245 349.5h2M1248 349.5h1M1252 349.5h1M1193 350.5h1M1197 350.5h1M1205 350.5h1M1241 350.5h1M1244 350.5h2M1249 350.5h1M1253 350.5h1M1192 351.5h1M1196 351.5h1M1204 351.5h1M1242 351.5h3M1250 351.5h1M1254 351.5h1M1192 352.5h1M1195 352.5h1M1203 352.5h1M1243 352.5h1M1251 352.5h1M1254 352.5h1M1191 353.5h1M1195 353.5h1M1202 353.5h1M1244 353.5h1M1251 353.5h1M1255 353.5h1M1191 354.5h1M1194 354.5h1M1201 354.5h1M1245 354.5h1M1252 354.5h1M1255 354.5h1M1190 355.5h1M1193 355.5h1M1200 355.5h1M1246 355.5h1M1253 355.5h1M1256 355.5h1M1190 356.5h1M1193 356.5h1M1200 356.5h1M1246 356.5h1M1253 356.5h1M1256 356.5h1M1189 357.5h1M1192 357.5h1M1199 357.5h1M1247 357.5h1M1254 357.5h1M1257 357.5h1M1189 358.5h1M1192 358.5h1M1198 358.5h1M1248 358.5h1M1254 358.5h1M1257 358.5h1M1188 359.5h1M1191 359.5h1M1198 359.5h1M1248 359.5h1M1255 359.5h1M1258 359.5h1M1188 360.5h1M1191 360.5h1M1197 360.5h1M1249 360.5h1M1255 360.5h1M1258 360.5h1M1188 361.5h1M1191 361.5h1M1197 361.5h1M1249 361.5h1M1255 361.5h1M1258 361.5h1M1187 362.5h1M1190 362.5h1M1197 362.5h1M1249 362.5h1M1256 362.5h1M1259 362.5h1M1187 363.5h1M1190 363.5h1M1196 363.5h1M1250 363.5h1M1256 363.5h1M1259 363.5h1M1187 364.5h1M1190 364.5h1M1196 364.5h1M1250 364.5h1M1256 364.5h1M1259 364.5h1M1187 365.5h1M1190 365.5h1M1196 365.5h1M1250 365.5h1M1256 365.5h1M1259 365.5h1M1187 366.5h1M1189 366.5h1M1195 366.5h1M1251 366.5h1M1257 366.5h1M1259 366.5h1M1186 367.5h1M1189 367.5h1M1195 367.5h1M1251 367.5h1M1257 367.5h1M1260 367.5h1M1186 368.5h1M1189 368.5h1M1195 368.5h1M1251 368.5h1M1257 368.5h1M1260 368.5h1M1186 369.5h1M1189 369.5h1M1195 369.5h1M1251 369.5h1M1257 369.5h1M1260 369.5h1M1186 370.5h1M1189 370.5h1M1195 370.5h1M1251 370.5h1M1257 370.5h1M1260 370.5h1M1186 371.5h1M1189 371.5h1M1195 371.5h1M1251 371.5h1M1257 371.5h1M1260 371.5h1M1186 372.5h1M1189 372.5h1M1195 372.5h1M1251 372.5h1M1257 372.5h1M1260 372.5h1M1186 373.5h1M1189 373.5h1M1195 373.5h1M1251 373.5h1M1257 373.5h1M1260 373.5h1M1186 374.5h1M1189 374.5h1M1195 374.5h1M1251 374.5h1M1257 374.5h1M1260 374.5h1M1186 375.5h1M1189 375.5h1M1195 375.5h1M1251 375.5h1M1257 375.5h1M1260 375.5h1M1187 376.5h1M1189 376.5h1M1195 376.5h1M1251 376.5h1M1257 376.5h1M1259 376.5h1M1187 377.5h1M1190 377.5h1M1196 377.5h1M1250 377.5h1M1256 377.5h1M1259 377.5h1M1187 378.5h1M1190 378.5h1M1196 378.5h1M1250 378.5h1M1256 378.5h1M1259 378.5h1M1187 379.5h1M1190 379.5h1M1196 379.5h1M1250 379.5h1M1256 379.5h1M1259 379.5h1M1187 380.5h1M1190 380.5h1M1197 380.5h1M1249 380.5h1M1256 380.5h1M1259 380.5h1M1188 381.5h1M1191 381.5h1M1197 381.5h1M1249 381.5h1M1255 381.5h1M1258 381.5h1M1188 382.5h1M1191 382.5h1M1197 382.5h1M1249 382.5h1M1255 382.5h1M1258 382.5h1M1188 383.5h1M1191 383.5h1M1198 383.5h1M1248 383.5h1M1255 383.5h1M1258 383.5h1M1189 384.5h1M1192 384.5h1M1198 384.5h1M1248 384.5h1M1254 384.5h1M1257 384.5h1M1189 385.5h1M1192 385.5h1M1199 385.5h1M1247 385.5h1M1254 385.5h1M1257 385.5h1M1190 386.5h1M1193 386.5h1M1200 386.5h1M1246 386.5h1M1253 386.5h1M1256 386.5h1M1190 387.5h1M1193 387.5h1M1200 387.5h1M1246 387.5h1M1253 387.5h1M1256 387.5h1M1191 388.5h1M1194 388.5h1M1201 388.5h1M1245 388.5h1M1252 388.5h1M1255 388.5h1M1191 389.5h1M1195 389.5h1M1202 389.5h1M1244 389.5h1M1251 389.5h1M1255 389.5h1M1192 390.5h1M1195 390.5h1M1202 390.5h2M1243 390.5h1M1251 390.5h1M1254 390.5h1M1192 391.5h1M1196 391.5h1M1201 391.5h2M1204 391.5h1M1242 391.5h1M1250 391.5h1M1254 391.5h1M1193 392.5h1M1197 392.5h1M1200 392.5h2M1205 392.5h1M1241 392.5h1M1249 392.5h1M1253 392.5h1M1194 393.5h1M1198 393.5h3M1206 393.5h2M1239 393.5h2M1248 393.5h1M1252 393.5h1M1195 394.5h1M1198 394.5h2M1208 394.5h2M1237 394.5h2M1247 394.5h2M1251 394.5h1M1196 395.5h3M1200 395.5h1M1210 395.5h2M1235 395.5h2M1246 395.5h1M1248 395.5h3M1196 396.5h2M1201 396.5h1M1212 396.5h2M1233 396.5h2M1245 396.5h1M1249 396.5h2M1195 397.5h2M1202 397.5h1M1214 397.5h4M1229 397.5h4M1244 397.5h1M1250 397.5h2M1194 398.5h2M1203 398.5h2M1218 398.5h11M1242 398.5h2M1251 398.5h2M1193 399.5h2M1205 399.5h1M1241 399.5h1M1252 399.5h2M1192 400.5h2M1206 400.5h2M1239 400.5h2M1253 400.5h2M1191 401.5h2M1208 401.5h3M1236 401.5h3M1254 401.5h2M1211 402.5h3M1233 402.5h3M1214 403.5h4M1229 403.5h4M1218 404.5h11" stroke="#000" stroke-width="1" fill="none"/><path d="M1219 336.5h9M1214 337.5h19M1211 338.5h7M1229 338.5h7M1208 339.5h6M1233 339.5h6M1206 340.5h5M1236 340.5h5M1204 341.5h4M1239 341.5h4M1203 342.5h3M1241 342.5h3M1201 343.5h4M1242 343.5h4M1200 344.5h3M1244 344.5h3M1199 345.5h3M1245 345.5h3M1198 346.5h3M1246 346.5h3M1197 347.5h3M1247 347.5h3M1196 348.5h3M1248 348.5h3M1195 349.5h3M1249 349.5h3M1194 350.5h3M1250 350.5h3M1193 351.5h3M1251 351.5h3M1193 352.5h2M1252 352.5h2M1192 353.5h3M1252 353.5h3M1192 354.5h2M1253 354.5h2M1191 355.5h2M1254 355.5h2M1191 356.5h2M1254 356.5h2M1190 357.5h2M1255 357.5h2M1190 358.5h2M1255 358.5h2M1189 359.5h2M1256 359.5h2M1189 360.5h2M1256 360.5h2M1189 361.5h2M1256 361.5h2M1188 362.5h2M1257 362.5h2M1188 363.5h2M1257 363.5h2M1188 364.5h2M1257 364.5h2M1188 365.5h2M1257 365.5h2M1188 366.5h1M1258 366.5h1M1187 367.5h2M1258 367.5h2M1187 368.5h2M1258 368.5h2M1187 369.5h2M1258 369.5h2M1187 370.5h2M1258 370.5h2M1187 371.5h2M1258 371.5h2M1187 372.5h2M1258 372.5h2M1187 373.5h2M1258 373.5h2M1187 374.5h2M1258 374.5h2M1187 375.5h2M1258 375.5h2M1188 376.5h1M1258 376.5h1M1188 377.5h2M1257 377.5h2M1188 378.5h2M1257 378.5h2M1188 379.5h2M1257 379.5h2M1188 380.5h2M1257 380.5h2M1189 381.5h2M1256 381.5h2M1189 382.5h2M1256 382.5h2M1189 383.5h2M1256 383.5h2M1190 384.5h2M1255 384.5h2M1190 385.5h2M1255 385.5h2M1191 386.5h2M1254 386.5h2M1191 387.5h2M1254 387.5h2M1192 388.5h2M1253 388.5h2M1192 389.5h3M1252 389.5h3M1193 390.5h2M1252 390.5h2M1193 391.5h3M1251 391.5h3M1194 392.5h3M1250 392.5h3M1195 393.5h3M1249 393.5h3M1196 394.5h2M1249 394.5h2" stroke="#fffbe6" stroke-width="1" fill="none"/><path d="M1218 339.5h11M1214 340.5h19M1211 341.5h25M1208 342.5h31M1206 343.5h35M1205 344.5h13M1229 344.5h13M1203 345.5h11M1233 345.5h11M1202 346.5h10M1235 346.5h10M1201 347.5h9M1237 347.5h9M1200 348.5h8M1239 348.5h7M1199 349.5h7M1241 349.5h4M1198 350.5h7M1242 350.5h2M1197 351.5h7M1196 352.5h7M1196 353.5h6M1195 354.5h6M1194 355.5h6M1194 356.5h6M1193 357.5h6M1193 358.5h5M1192 359.5h6M1192 360.5h5M1192 361.5h5M1191 362.5h6M1191 363.5h5M1191 364.5h5M1191 365.5h5M1190 366.5h5M1190 367.5h5M1190 368.5h5M1190 369.5h5M1190 370.5h5M1190 371.5h5M1190 372.5h5M1190 373.5h5M1190 374.5h5M1190 375.5h5M1190 376.5h5M1191 377.5h5M1191 378.5h5M1191 379.5h5M1191 380.5h6M1192 381.5h5M1192 382.5h5M1192 383.5h6M1193 384.5h5M1193 385.5h6M1194 386.5h6M1194 387.5h6M1195 388.5h6M1196 389.5h6M1196 390.5h6M1197 391.5h4M1198 392.5h2" stroke="#d2d2d2" stroke-width="1" fill="none"/><path d="M1247 349.5h1M1246 350.5h3M1245 351.5h5M1244 352.5h7M1245 353.5h6M1246 354.5h6M1247 355.5h6M1247 356.5h6M1248 357.5h6M1249 358.5h5M1249 359.5h6M1250 360.5h5M1250 361.5h5M1250 362.5h6M1251 363.5h5M1251 364.5h5M1251 365.5h5M1252 366.5h5M1252 367.5h5M1252 368.5h5M1252 369.5h5M1252 370.5h5M1252 371.5h5M1252 372.5h5M1252 373.5h5M1252 374.5h5M1252 375.5h5M1252 376.5h5M1251 377.5h5M1251 378.5h5M1251 379.5h5M1250 380.5h6M1250 381.5h5M1250 382.5h5M1249 383.5h6M1249 384.5h5M1248 385.5h6M1247 386.5h6M1247 387.5h6M1246 388.5h6M1245 389.5h6M1244 390.5h7M1203 391.5h1M1243 391.5h7M1202 392.5h3M1242 392.5h7M1201 393.5h5M1241 393.5h7M1200 394.5h8M1239 394.5h8M1201 395.5h9M1237 395.5h9M1202 396.5h10M1235 396.5h10M1203 397.5h11M1233 397.5h11M1205 398.5h13M1229 398.5h13M1206 399.5h35M1208 400.5h31M1211 401.5h25M1214 402.5h19M1218 403.5h11" stroke="#b4b4b4" stroke-width="1" fill="none"/><path d="M1202.1 361.4L1217.8 368.1" stroke="#fff" stroke-width="1.9" shape-rendering="auto"/></svg>
<div class="a" style="left:1279px;top:79px;width:1px;height:895px;background:#f6f5ee"></div>
<div class="a" style="left:0;top:974px;width:1090px;height:3px;background:#fff"></div>
<div class="a" style="left:0;top:977px;width:1280px;height:1px;background:#fff"></div>
<div class="a" style="left:0;top:978px;width:1280px;height:1px;background:#9d9b8b"></div>
<div class="a" style="left:0;top:979px;width:1280px;height:17px;background:linear-gradient(to bottom,#c4c1b0 0px,#c4c1b0 1px,#dad7c6 1px,#dad7c6 2px,#e6e3d2 2px,#e6e3d2 3px,#ecead9 3px,#ebe8d7 11px,#e6e3d0 12.5px,#dcd9c4 14px,#d5d2bb 16px,#e9e2c6 16px,#e9e2c6 17px)"></div>
<div class="t" style="left:1.80px;top:980px;font-size:11px;line-height:14px;color:#000;font-weight:400;letter-spacing:-0.213px;">Connected</div>
<div class="t" style="left:1176.20px;top:980px;font-size:11px;line-height:14px;color:#000;font-weight:400;letter-spacing:-0.094px;">15-08-2015  09:41</div>
<div class="a" style="left:1170px;top:981px;width:1px;height:13px;background:#c5c2b2"></div><div class="a" style="left:1171px;top:981px;width:1px;height:13px;background:#fff"></div>
<div class="a" style="left:0;top:996px;width:1280px;height:1px;background:#2b5fd9"></div><div class="a" style="left:0;top:997px;width:1280px;height:1px;background:#3b8aea"></div>
<div class="a" style="left:1188px;top:996px;width:92px;height:1px;background:#1686e0"></div><div class="a" style="left:1188px;top:997px;width:92px;height:1px;background:#19a4f4"></div>
<div class="a" style="left:0;top:996px;width:93px;height:1px;background:#2f8a32"></div><div class="a" style="left:0;top:997px;width:93px;height:1px;background:#45a548"></div>
</div></body></html>
